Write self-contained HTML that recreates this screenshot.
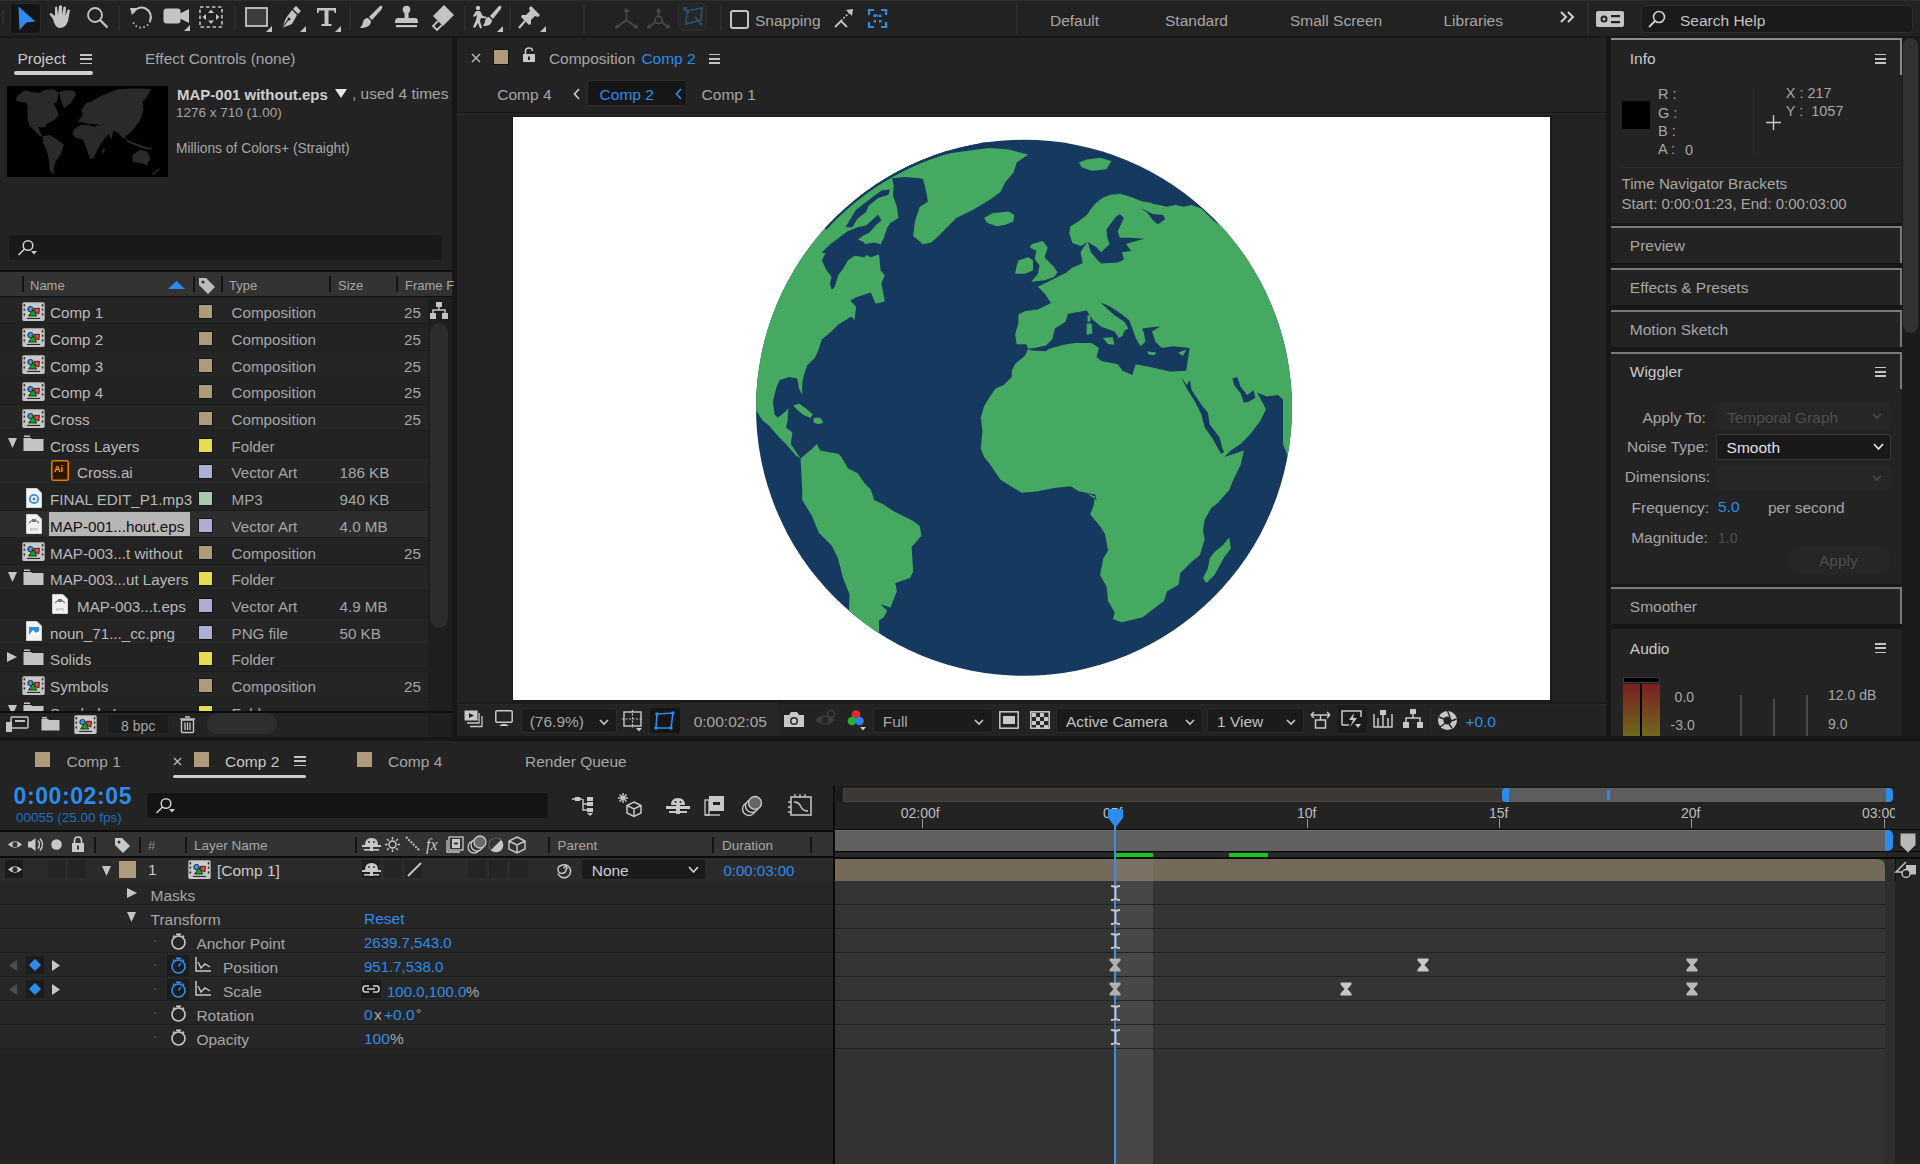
<!DOCTYPE html><html><head><meta charset="utf-8"><style>
html,body{margin:0;padding:0;width:1920px;height:1164px;overflow:hidden;background:#171717}
body>*{position:absolute}
.t{position:absolute;white-space:pre;line-height:normal;font-family:"Liberation Sans",sans-serif}
svg{position:absolute;overflow:visible}
div{position:absolute;box-sizing:border-box}
</style></head><body>
<div style="left:0px;top:0px;width:1920px;height:1164px;background:#171717;"></div>
<div style="left:0px;top:0px;width:1920px;height:36px;background:#222222;"></div>
<div style="left:0px;top:0px;width:1920px;height:1px;background:#2c2c2c;"></div>
<div style="left:0px;top:38px;width:452px;height:698px;background:#232323;"></div>
<div style="left:457px;top:38px;width:1149px;height:698px;background:#232323;"></div>
<div style="left:1611px;top:38px;width:309px;height:698px;background:#232323;"></div>
<div style="left:0px;top:741px;width:1920px;height:423px;background:#232323;"></div>
<div style="left:2px;top:10px;width:2px;height:14px;background:#2e2e2e;"></div>
<div style="left:10px;top:2.5px;width:31px;height:31px;background:#141414;border-radius:4px;border:1px solid #2a2a2a"></div>
<svg style="left:17px;top:5px;" width="20" height="26" viewBox="0 0 20 26"><path d="M1.5,1.5 L18.5,16.5 L9.5,17.5 L2.5,25 Z" fill="#2d8ceb"/></svg>
<svg style="left:48px;top:5px;" width="25" height="24" viewBox="0 0 25 24"><path d="M5,14 L2,10 Q1,8 3,8 L7,11 L7,3 Q7,1 9,1.5 L10,10 L11,1 Q12,-0.5 14,1 L14,10 L15.5,2 Q17,1 18,2.5 L17.5,11 L19.5,5 Q21,4 22,5.5 L20,16 Q18,23 12,23 Q7,23 5,14Z" fill="#c4c4c4"/></svg>
<svg style="left:86px;top:6px;" width="23" height="23" viewBox="0 0 23 23"><circle cx="9" cy="9" r="7" fill="none" stroke="#c4c4c4" stroke-width="1.8"/><path d="M14,14 L21.5,21.5" stroke="#c4c4c4" stroke-width="2.4"/></svg>
<div style="left:118px;top:6px;width:1.5px;height:25px;background:#2c2c2c;"></div>
<svg style="left:129px;top:5px;" width="24" height="24" viewBox="0 0 24 24"><path d="M4,8 A9,9 0 1 1 21,16" fill="none" stroke="#c4c4c4" stroke-width="2"/><path d="M1,3 L8,3 L3,10Z" fill="#c4c4c4"/><path d="M21,16 A9,9 0 0 1 4,17" fill="none" stroke="#c4c4c4" stroke-width="1.8" stroke-dasharray="1.5,2.5"/></svg>
<svg style="left:163px;top:7px;" width="27" height="24" viewBox="0 0 27 24"><rect x="0.5" y="1.5" width="17" height="15" rx="3" fill="#c4c4c4"/><path d="M16,7 L26,2 L26,16 L16,11Z" fill="#c4c4c4"/></svg>
<svg style="left:184px;top:25px;" width="6" height="6" viewBox="0 0 6 6"><path d="M6,0 L6,6 L0,6Z" fill="#c4c4c4"/></svg>
<svg style="left:199px;top:6px;" width="24" height="22" viewBox="0 0 24 22"><rect x="1" y="1" width="22" height="20" fill="none" stroke="#c4c4c4" stroke-width="1.6" stroke-dasharray="3.5,2.5"/><path d="M12,3.5 L15,7 L9,7Z M12,18 L15,14.5 L9,14.5Z M3.5,11 L7,8 L7,14Z M20.5,11 L17,8 L17,14Z" fill="#c4c4c4"/></svg>
<div style="left:234px;top:6px;width:1.5px;height:25px;background:#2c2c2c;"></div>
<svg style="left:245px;top:7px;" width="23" height="20" viewBox="0 0 23 20"><rect x="1" y="1" width="21" height="18" fill="#3c3c3c" stroke="#c4c4c4" stroke-width="1.8"/></svg>
<svg style="left:266px;top:26px;" width="6" height="6" viewBox="0 0 6 6"><path d="M6,0 L6,6 L0,6Z" fill="#c4c4c4"/></svg>
<svg style="left:279px;top:5px;" width="23" height="24" viewBox="0 0 23 24"><path d="M17,1 L22,6 L19,9 L14,4Z" fill="#c4c4c4"/><path d="M13,5 L18,10 L13,19 L3,23 L7,13Z" fill="#c4c4c4"/><path d="M3,23 L9,15" stroke="#222" stroke-width="1.2"/><circle cx="10" cy="14" r="1.5" fill="#222"/></svg>
<svg style="left:300px;top:26px;" width="6" height="6" viewBox="0 0 6 6"><path d="M6,0 L6,6 L0,6Z" fill="#c4c4c4"/></svg>
<svg style="left:316px;top:7px;" width="21" height="20" viewBox="0 0 21 20"><path d="M1,1 L20,1 L20,6 L18.5,6 L18,3.5 L12.5,3.5 L12.5,17 L15.5,17 L15.5,19 L5.5,19 L5.5,17 L8.5,17 L8.5,3.5 L3,3.5 L2.5,6 L1,6Z" fill="#c4c4c4"/></svg>
<svg style="left:335px;top:26px;" width="6" height="6" viewBox="0 0 6 6"><path d="M6,0 L6,6 L0,6Z" fill="#c4c4c4"/></svg>
<div style="left:349px;top:6px;width:1.5px;height:25px;background:#2c2c2c;"></div>
<svg style="left:359px;top:5px;" width="25" height="24" viewBox="0 0 25 24"><path d="M23,1 Q24,2 22,5 L13,15 L10,12 L20,2 Q22,0 23,1Z" fill="#c4c4c4"/><path d="M9,13 L12,16 Q12,21 6,22.5 Q3,23 1,23 Q4,20 4,17 Q5,13 9,13Z" fill="#c4c4c4"/></svg>
<svg style="left:394px;top:5px;" width="25" height="24" viewBox="0 0 25 24"><circle cx="12.5" cy="4.5" r="3.8" fill="#c4c4c4"/><rect x="10.5" y="7" width="4" height="6" fill="#c4c4c4"/><path d="M4,13 L21,13 Q24,13 24,17 L24,18 L1,18 L1,17 Q1,13 4,13Z" fill="#c4c4c4"/><rect x="2" y="20" width="21" height="2.2" fill="#c4c4c4"/></svg>
<svg style="left:430px;top:4px;" width="25" height="26" viewBox="0 0 25 26"><path d="M14,1 L24,11 L13,22 L3,12Z" fill="#c4c4c4"/><path d="M8,17 L3,22 L7,26 L12,21" fill="none" stroke="#c4c4c4" stroke-width="1.8"/></svg>
<div style="left:464px;top:6px;width:1.5px;height:25px;background:#2c2c2c;"></div>
<svg style="left:472px;top:5px;" width="31" height="24" viewBox="0 0 31 24"><circle cx="6" cy="3" r="2.2" fill="#c4c4c4"/><path d="M4,6 L8,6 L11,11 L15,12 L14,13.5 L9,13 L8,16 L10,23 L8,23.5 L6,18 L3,23 L1,22 L4,15 L5,10 L2,12 L1,11Z" fill="#c4c4c4"/><path d="M29,1 Q30,2 28,5 L21,14 L18,11 L26,2 Q28,0 29,1Z" fill="#c4c4c4"/><path d="M17,12 L20,15 Q20,20 14,21 Q12,21 11,21 Q13,18 13,16 Q14,12 17,12Z" fill="#c4c4c4"/></svg>
<svg style="left:497px;top:26px;" width="6" height="6" viewBox="0 0 6 6"><path d="M6,0 L6,6 L0,6Z" fill="#c4c4c4"/></svg>
<div style="left:509px;top:6px;width:1.5px;height:25px;background:#2c2c2c;"></div>
<svg style="left:518px;top:5px;" width="23" height="24" viewBox="0 0 23 24"><path d="M13,1 L22,10 L20,12 L17,11 L13,15 L13,19 L11,20 L3,12 L4,10 L8,10 L12,6 L11,3Z" fill="#c4c4c4"/><path d="M7,16 L1,23" stroke="#c4c4c4" stroke-width="2.2"/></svg>
<svg style="left:540px;top:26px;" width="6" height="6" viewBox="0 0 6 6"><path d="M6,0 L6,6 L0,6Z" fill="#c4c4c4"/></svg>
<div style="left:583px;top:2px;width:1.5px;height:32px;background:#2c2c2c;"></div>
<svg style="left:615px;top:8px;" width="23" height="21" viewBox="0 0 23 21"><path d="M11.5,1 L11.5,12 L2,19 M11.5,12 L21,19" fill="none" stroke="#4a4a4a" stroke-width="1.6"/><path d="M8.5,4 L11.5,0 L14.5,4Z M1,16 L0,20.5 L4.5,20Z M22,16 L23,20.5 L18.5,20Z" fill="#4a4a4a"/></svg>
<svg style="left:647px;top:8px;" width="23" height="21" viewBox="0 0 23 21"><path d="M11.5,1 L11.5,8 M8.5,14 L2,19 M14.5,14 L21,19" fill="none" stroke="#4a4a4a" stroke-width="1.6"/><circle cx="11.5" cy="12" r="3.5" fill="none" stroke="#4a4a4a" stroke-width="1.6"/><path d="M8.5,4 L11.5,0 L14.5,4Z M1,16 L0,20.5 L4.5,20Z M22,16 L23,20.5 L18.5,20Z" fill="#4a4a4a"/></svg>
<div style="left:678px;top:3px;width:29px;height:28px;background:#262626;border-radius:4px;border:1px solid #2e2e2e"></div>
<svg style="left:682px;top:6px;" width="22" height="21" viewBox="0 0 22 21"><path d="M5,5 L20,2 L19,14 L4,18Z" fill="none" stroke="#2a5277" stroke-width="1.6"/><path d="M2,2 L7,7 M13,11 L20,19" stroke="#2a5277" stroke-width="1.6"/><path d="M1,1 L6,1.5 L1.5,6Z" fill="#2a5277"/></svg>
<div style="left:720px;top:5px;width:1.5px;height:26px;background:#2c2c2c;"></div>
<div style="left:730px;top:10px;width:19px;height:19px;background:none;border:2.2px solid #c4c4c4;border-radius:3px"></div>
<span class="t" style="left:755px;top:12.47px;font-size:15.5px;color:#a6a6a6;">Snapping</span>
<svg style="left:834px;top:8px;" width="20" height="21" viewBox="0 0 20 21"><path d="M1,19 L7,13 L13,19" fill="none" stroke="#c4c4c4" stroke-width="1.8"/><path d="M7,13 L15,5" stroke="#c4c4c4" stroke-width="1.5" stroke-dasharray="2,1.5"/><path d="M12,2 L19,1 L18,8Z" fill="#c4c4c4"/></svg>
<svg style="left:868px;top:9px;" width="19" height="19" viewBox="0 0 19 19"><path d="M1,6 L1,1 L6,1 M13,1 L18,1 L18,6 M18,13 L18,18 L13,18 M6,18 L1,18 L1,13" fill="none" stroke="#2d8ceb" stroke-width="2.2"/><path d="M7,6 L9.5,6 M9.5,6 L9.5,8 M12,6 L12,8" stroke="#2d8ceb" stroke-width="1.6"/><rect x="5.5" y="5.5" width="2.5" height="2.5" fill="#2d8ceb"/><rect x="11" y="5.5" width="2.5" height="2.5" fill="#2d8ceb"/><rect x="5.5" y="11" width="2.5" height="2.5" fill="#2d8ceb"/><rect x="11" y="11" width="2.5" height="2.5" fill="#2d8ceb"/></svg>
<div style="left:1016px;top:2px;width:1.5px;height:32px;background:#2c2c2c;"></div>
<span class="t" style="left:1050px;top:12.47px;font-size:15.5px;color:#a6a6a6;">Default</span>
<span class="t" style="left:1165px;top:12.47px;font-size:15.5px;color:#a6a6a6;">Standard</span>
<span class="t" style="left:1290px;top:12.47px;font-size:15.5px;color:#a6a6a6;">Small Screen</span>
<span class="t" style="left:1443.5px;top:12.47px;font-size:15.5px;color:#a6a6a6;">Libraries</span>
<svg style="left:1560px;top:11px;" width="15" height="12" viewBox="0 0 15 12"><path d="M1,1 L6,6 L1,11 M8,1 L13,6 L8,11" fill="none" stroke="#d0d0d0" stroke-width="2"/></svg>
<div style="left:1587px;top:2px;width:1.5px;height:32px;background:#2c2c2c;"></div>
<svg style="left:1596px;top:11px;" width="28" height="16" viewBox="0 0 28 16"><rect x="0" y="0" width="28" height="16" rx="2" fill="#c4c4c4"/><circle cx="8" cy="8" r="3.5" fill="#222"/><circle cx="8" cy="8" r="1.5" fill="#c4c4c4"/><rect x="15" y="4" width="9" height="2.2" fill="#222"/><rect x="15" y="10" width="9" height="2.2" fill="#222"/></svg>
<div style="left:1641px;top:5px;width:272px;height:28px;background:#1a1a1a;border-radius:4px;border:1px solid #2e2e2e"></div>
<svg style="left:1648px;top:10px;" width="18" height="18" viewBox="0 0 18 18"><circle cx="11" cy="7" r="5.5" fill="none" stroke="#cfcfcf" stroke-width="1.6"/><path d="M7,11 L1,17" stroke="#cfcfcf" stroke-width="1.8"/></svg>
<span class="t" style="left:1680px;top:11.97px;font-size:15.5px;color:#c4c4c4;">Search Help</span>
<span class="t" style="left:17.5px;top:49.67px;font-size:15.5px;color:#c9c9c9;">Project</span>
<div style="left:80px;top:54.0px;width:12px;height:1.6px;background:#c4c4c4;"></div>
<div style="left:80px;top:58.3px;width:12px;height:1.6px;background:#c4c4c4;"></div>
<div style="left:80px;top:62.6px;width:12px;height:1.6px;background:#c4c4c4;"></div>
<div style="left:14px;top:71px;width:79px;height:3.5px;background:#cfcfcf;border-radius:2px"></div>
<span class="t" style="left:145px;top:49.67px;font-size:15.5px;color:#a6a6a6;">Effect Controls (none)</span>
<div style="left:7px;top:86px;width:161px;height:91px;background:#000;"></div>
<svg style="left:7px;top:86px;" width="161" height="91" viewBox="0 0 161 91"><path d="M11.1,9.3 L18.0,4.2 L24.0,5.9 L32.7,6.7 L37.0,4.2 L46.5,3.3 L51.7,6.7 L50.0,15.4 L46.5,18.0 L50.0,24.0 L51.7,29.2 L46.5,34.4 L39.6,37.9 L37.9,41.3 L31.0,41.3 L34.4,48.2 L36.1,50.8 L32.7,50.0 L25.8,43.1 L22.3,39.6 L20.6,32.7 L20.6,19.7 L18.8,16.3 L11.1,15.4 L8.5,13.7Z" fill="#2a2a2a"/><path d="M51.7,5.9 L58.6,4.2 L67.3,5.0 L69.0,8.5 L63.8,17.1 L56.9,22.3 L54.3,15.4Z" fill="#2a2a2a"/><path d="M36.1,50.0 L43.1,49.1 L50.0,53.4 L56.9,58.6 L53.4,69.0 L48.2,75.9 L46.5,84.6 L47.4,88.0 L43.1,85.4 L42.2,75.9 L39.6,63.8 L36.1,56.9Z" fill="#2a2a2a"/><path d="M70.7,36.1 L75.9,28.4 L74.2,24.0 L79.4,17.1 L84.6,15.4 L93.2,10.2 L101.9,6.7 L110.5,3.3 L123.5,2.4 L136.4,2.4 L144.2,3.3 L139.9,11.1 L135.6,15.4 L136.4,24.0 L133.0,34.4 L127.8,41.3 L123.5,46.5 L119.1,50.0 L115.7,46.5 L110.5,46.5 L106.2,44.8 L104.4,53.4 L100.1,44.8 L97.5,41.3 L89.7,37.9 L81.1,37.9 L74.2,36.1Z" fill="#2a2a2a"/><path d="M67.3,43.1 L74.2,38.7 L82.8,39.6 L89.7,41.3 L93.2,46.5 L98.4,51.7 L93.2,58.6 L89.7,65.5 L86.3,72.5 L82.8,72.5 L79.4,62.1 L75.9,53.4 L69.0,51.7 L65.5,48.2Z" fill="#2a2a2a"/><path d="M110.5,46.5 L117.4,46.5 L119.1,53.4 L114.0,50.0Z" fill="#2a2a2a"/><path d="M119.1,53.4 L127.8,56.9 L136.4,60.3 L145.1,62.1 L144.2,63.8 L134.7,62.1 L126.1,58.6 L119.1,55.2Z" fill="#2a2a2a"/><path d="M125.2,69.0 L133.0,63.8 L139.9,65.5 L143.4,72.5 L139.9,79.4 L135.6,77.6 L126.1,75.9Z" fill="#2a2a2a"/><path d="M94.9,63.8 L98.4,62.1 L95.8,69.0Z" fill="#2a2a2a"/><path d="M88.0,38.7 L97.5,40.5 L102.7,46.5 L99.3,51.7 L93.2,48.2 L89.7,42.2Z" fill="#2a2a2a"/><path d="M145.1,88.0 L152.0,82.0 L152.9,83.3 L145.9,88.9Z" fill="#2a2a2a"/></svg>
<span class="t" style="left:177px;top:85.62px;font-size:15px;color:#cfcfcf;font-weight:700;">MAP-001 without.eps</span>
<svg style="left:335px;top:89px;" width="12" height="9" viewBox="0 0 12 9"><path d="M0,0 L12,0 L6,9 Z" fill="#e6e6e6"/></svg>
<span class="t" style="left:352px;top:85.17px;font-size:15.5px;color:#a6a6a6;">, used 4 times</span>
<span class="t" style="left:176px;top:105.08px;font-size:13.5px;color:#a6a6a6;">1276 x 710 (1.00)</span>
<span class="t" style="left:176px;top:140.81px;font-size:13.8px;color:#a6a6a6;">Millions of Colors+ (Straight)</span>
<div style="left:8px;top:234px;width:435px;height:27px;background:#191919;border-radius:4px;border:1px solid #262626"></div>
<svg style="left:17px;top:239px;" width="20" height="17" viewBox="0 0 20 17"><circle cx="11" cy="6.5" r="4.8" fill="none" stroke="#cfcfcf" stroke-width="1.5"/><path d="M7.5,10 L1.5,16" stroke="#cfcfcf" stroke-width="1.6"/><path d="M14,12 L20,12 L17,15.5Z" fill="#cfcfcf"/></svg>
<div style="left:0px;top:270px;width:452px;height:2px;background:#111;"></div>
<div style="left:0px;top:272px;width:452px;height:25px;background:#333333;"></div>
<div style="left:0px;top:296px;width:452px;height:1.5px;background:#111;"></div>
<div style="left:22px;top:276px;width:1.6px;height:16px;background:#141414;"></div>
<div style="left:193px;top:276px;width:1.6px;height:16px;background:#141414;"></div>
<div style="left:221px;top:276px;width:1.6px;height:16px;background:#141414;"></div>
<div style="left:329px;top:276px;width:1.6px;height:16px;background:#141414;"></div>
<div style="left:396px;top:276px;width:1.6px;height:16px;background:#141414;"></div>
<span class="t" style="left:30px;top:278.24px;font-size:13px;color:#a6a6a6;">Name</span>
<svg style="left:168px;top:281px;" width="17" height="8" viewBox="0 0 17 8"><path d="M0,8 L8.5,0 L17,8 Z" fill="#2d8ceb"/></svg>
<svg style="left:198px;top:277px;" width="18" height="17" viewBox="0 0 18 17"><path d="M1,1 L8,1 L17,10 L10,17 L1,8 Z" fill="#bdbdbd"/><circle cx="5" cy="5" r="1.6" fill="#333"/></svg>
<span class="t" style="left:229px;top:278.24px;font-size:13px;color:#a6a6a6;">Type</span>
<span class="t" style="left:338px;top:278.24px;font-size:13px;color:#a6a6a6;">Size</span>
<span class="t" style="left:405px;top:278.24px;font-size:13px;color:#a6a6a6;">Frame F</span>
<div style="left:0;top:297px;width:428px;height:414px;overflow:hidden">
<div style="left:0px;top:-0.30000000000001137px;width:428px;height:26.7px;background:#252525;"></div>
<div style="left:0px;top:-0.30000000000001137px;width:428px;height:1px;background:#1d1d1d;"></div>
<svg style="left:22px;top:4.699999999999989px;" width="23" height="19" viewBox="0 0 23 19"><rect x="0.3" y="0.3" width="22.4" height="18.6" rx="1.6" fill="#c2c2c2"/><ellipse cx="2.3" cy="3.2" rx="0.8" ry="1.2" fill="#2e2e2e"/><ellipse cx="2.3" cy="7.6" rx="0.8" ry="1.2" fill="#2e2e2e"/><ellipse cx="2.3" cy="12.4" rx="0.8" ry="1.2" fill="#2e2e2e"/><ellipse cx="20.6" cy="3.2" rx="0.8" ry="1.2" fill="#2e2e2e"/><ellipse cx="20.6" cy="7.6" rx="0.8" ry="1.2" fill="#2e2e2e"/><ellipse cx="20.6" cy="12.4" rx="0.8" ry="1.2" fill="#2e2e2e"/><rect x="4.2" y="1.5" width="14.6" height="13" fill="#cbcbcb"/><path d="M12.2,6.4 L17.4,6.3 L16.9,12 L13.5,10.6Z" fill="#ff3b3b" stroke="#1d1d1d" stroke-width="0.9"/><circle cx="8.5" cy="7.1" r="2.7" fill="#2f93f2" stroke="#1d1d1d" stroke-width="0.9"/><path d="M6.6,14 L11,7.6 L14.8,14Z" fill="#14a814" stroke="#1d1d1d" stroke-width="0.9"/><rect x="5" y="15.9" width="13" height="1.1" fill="#2a2a2a"/></svg>
<span class="t" style="left:50px;top:7.24px;font-size:15.2px;color:#b9b9b9;">Comp 1</span>
<div style="left:198px;top:7.199999999999989px;width:15px;height:15px;background:#151515;"></div>
<div style="left:199px;top:8.199999999999989px;width:13px;height:13px;background:#ae9b79;"></div>
<span class="t" style="left:231.5px;top:7.24px;font-size:15.2px;color:#a6a6a6;">Composition</span>
<span class="t" style="left:380px;top:7.24px;width:41px;text-align:right;font-size:15.2px;color:#a6a6a6">25</span>
<div style="left:0px;top:26.399999999999977px;width:428px;height:26.7px;background:#232323;"></div>
<div style="left:0px;top:26.399999999999977px;width:428px;height:1px;background:#1d1d1d;"></div>
<svg style="left:22px;top:31.399999999999977px;" width="23" height="19" viewBox="0 0 23 19"><rect x="0.3" y="0.3" width="22.4" height="18.6" rx="1.6" fill="#c2c2c2"/><ellipse cx="2.3" cy="3.2" rx="0.8" ry="1.2" fill="#2e2e2e"/><ellipse cx="2.3" cy="7.6" rx="0.8" ry="1.2" fill="#2e2e2e"/><ellipse cx="2.3" cy="12.4" rx="0.8" ry="1.2" fill="#2e2e2e"/><ellipse cx="20.6" cy="3.2" rx="0.8" ry="1.2" fill="#2e2e2e"/><ellipse cx="20.6" cy="7.6" rx="0.8" ry="1.2" fill="#2e2e2e"/><ellipse cx="20.6" cy="12.4" rx="0.8" ry="1.2" fill="#2e2e2e"/><rect x="4.2" y="1.5" width="14.6" height="13" fill="#cbcbcb"/><path d="M12.2,6.4 L17.4,6.3 L16.9,12 L13.5,10.6Z" fill="#ff3b3b" stroke="#1d1d1d" stroke-width="0.9"/><circle cx="8.5" cy="7.1" r="2.7" fill="#2f93f2" stroke="#1d1d1d" stroke-width="0.9"/><path d="M6.6,14 L11,7.6 L14.8,14Z" fill="#14a814" stroke="#1d1d1d" stroke-width="0.9"/><rect x="5" y="15.9" width="13" height="1.1" fill="#2a2a2a"/></svg>
<span class="t" style="left:50px;top:33.94px;font-size:15.2px;color:#b9b9b9;">Comp 2</span>
<div style="left:198px;top:33.89999999999998px;width:15px;height:15px;background:#151515;"></div>
<div style="left:199px;top:34.89999999999998px;width:13px;height:13px;background:#ae9b79;"></div>
<span class="t" style="left:231.5px;top:33.94px;font-size:15.2px;color:#a6a6a6;">Composition</span>
<span class="t" style="left:380px;top:33.94px;width:41px;text-align:right;font-size:15.2px;color:#a6a6a6">25</span>
<div style="left:0px;top:53.099999999999966px;width:428px;height:26.7px;background:#252525;"></div>
<div style="left:0px;top:53.099999999999966px;width:428px;height:1px;background:#1d1d1d;"></div>
<svg style="left:22px;top:58.099999999999966px;" width="23" height="19" viewBox="0 0 23 19"><rect x="0.3" y="0.3" width="22.4" height="18.6" rx="1.6" fill="#c2c2c2"/><ellipse cx="2.3" cy="3.2" rx="0.8" ry="1.2" fill="#2e2e2e"/><ellipse cx="2.3" cy="7.6" rx="0.8" ry="1.2" fill="#2e2e2e"/><ellipse cx="2.3" cy="12.4" rx="0.8" ry="1.2" fill="#2e2e2e"/><ellipse cx="20.6" cy="3.2" rx="0.8" ry="1.2" fill="#2e2e2e"/><ellipse cx="20.6" cy="7.6" rx="0.8" ry="1.2" fill="#2e2e2e"/><ellipse cx="20.6" cy="12.4" rx="0.8" ry="1.2" fill="#2e2e2e"/><rect x="4.2" y="1.5" width="14.6" height="13" fill="#cbcbcb"/><path d="M12.2,6.4 L17.4,6.3 L16.9,12 L13.5,10.6Z" fill="#ff3b3b" stroke="#1d1d1d" stroke-width="0.9"/><circle cx="8.5" cy="7.1" r="2.7" fill="#2f93f2" stroke="#1d1d1d" stroke-width="0.9"/><path d="M6.6,14 L11,7.6 L14.8,14Z" fill="#14a814" stroke="#1d1d1d" stroke-width="0.9"/><rect x="5" y="15.9" width="13" height="1.1" fill="#2a2a2a"/></svg>
<span class="t" style="left:50px;top:60.64px;font-size:15.2px;color:#b9b9b9;">Comp 3</span>
<div style="left:198px;top:60.599999999999966px;width:15px;height:15px;background:#151515;"></div>
<div style="left:199px;top:61.599999999999966px;width:13px;height:13px;background:#ae9b79;"></div>
<span class="t" style="left:231.5px;top:60.64px;font-size:15.2px;color:#a6a6a6;">Composition</span>
<span class="t" style="left:380px;top:60.64px;width:41px;text-align:right;font-size:15.2px;color:#a6a6a6">25</span>
<div style="left:0px;top:79.79999999999995px;width:428px;height:26.7px;background:#232323;"></div>
<div style="left:0px;top:79.79999999999995px;width:428px;height:1px;background:#1d1d1d;"></div>
<svg style="left:22px;top:84.79999999999995px;" width="23" height="19" viewBox="0 0 23 19"><rect x="0.3" y="0.3" width="22.4" height="18.6" rx="1.6" fill="#c2c2c2"/><ellipse cx="2.3" cy="3.2" rx="0.8" ry="1.2" fill="#2e2e2e"/><ellipse cx="2.3" cy="7.6" rx="0.8" ry="1.2" fill="#2e2e2e"/><ellipse cx="2.3" cy="12.4" rx="0.8" ry="1.2" fill="#2e2e2e"/><ellipse cx="20.6" cy="3.2" rx="0.8" ry="1.2" fill="#2e2e2e"/><ellipse cx="20.6" cy="7.6" rx="0.8" ry="1.2" fill="#2e2e2e"/><ellipse cx="20.6" cy="12.4" rx="0.8" ry="1.2" fill="#2e2e2e"/><rect x="4.2" y="1.5" width="14.6" height="13" fill="#cbcbcb"/><path d="M12.2,6.4 L17.4,6.3 L16.9,12 L13.5,10.6Z" fill="#ff3b3b" stroke="#1d1d1d" stroke-width="0.9"/><circle cx="8.5" cy="7.1" r="2.7" fill="#2f93f2" stroke="#1d1d1d" stroke-width="0.9"/><path d="M6.6,14 L11,7.6 L14.8,14Z" fill="#14a814" stroke="#1d1d1d" stroke-width="0.9"/><rect x="5" y="15.9" width="13" height="1.1" fill="#2a2a2a"/></svg>
<span class="t" style="left:50px;top:87.34px;font-size:15.2px;color:#b9b9b9;">Comp 4</span>
<div style="left:198px;top:87.29999999999995px;width:15px;height:15px;background:#151515;"></div>
<div style="left:199px;top:88.29999999999995px;width:13px;height:13px;background:#ae9b79;"></div>
<span class="t" style="left:231.5px;top:87.34px;font-size:15.2px;color:#a6a6a6;">Composition</span>
<span class="t" style="left:380px;top:87.34px;width:41px;text-align:right;font-size:15.2px;color:#a6a6a6">25</span>
<div style="left:0px;top:106.5px;width:428px;height:26.7px;background:#252525;"></div>
<div style="left:0px;top:106.5px;width:428px;height:1px;background:#1d1d1d;"></div>
<svg style="left:22px;top:111.5px;" width="23" height="19" viewBox="0 0 23 19"><rect x="0.3" y="0.3" width="22.4" height="18.6" rx="1.6" fill="#c2c2c2"/><ellipse cx="2.3" cy="3.2" rx="0.8" ry="1.2" fill="#2e2e2e"/><ellipse cx="2.3" cy="7.6" rx="0.8" ry="1.2" fill="#2e2e2e"/><ellipse cx="2.3" cy="12.4" rx="0.8" ry="1.2" fill="#2e2e2e"/><ellipse cx="20.6" cy="3.2" rx="0.8" ry="1.2" fill="#2e2e2e"/><ellipse cx="20.6" cy="7.6" rx="0.8" ry="1.2" fill="#2e2e2e"/><ellipse cx="20.6" cy="12.4" rx="0.8" ry="1.2" fill="#2e2e2e"/><rect x="4.2" y="1.5" width="14.6" height="13" fill="#cbcbcb"/><path d="M12.2,6.4 L17.4,6.3 L16.9,12 L13.5,10.6Z" fill="#ff3b3b" stroke="#1d1d1d" stroke-width="0.9"/><circle cx="8.5" cy="7.1" r="2.7" fill="#2f93f2" stroke="#1d1d1d" stroke-width="0.9"/><path d="M6.6,14 L11,7.6 L14.8,14Z" fill="#14a814" stroke="#1d1d1d" stroke-width="0.9"/><rect x="5" y="15.9" width="13" height="1.1" fill="#2a2a2a"/></svg>
<span class="t" style="left:50px;top:114.04px;font-size:15.2px;color:#b9b9b9;">Cross</span>
<div style="left:198px;top:114.0px;width:15px;height:15px;background:#151515;"></div>
<div style="left:199px;top:115.0px;width:13px;height:13px;background:#ae9b79;"></div>
<span class="t" style="left:231.5px;top:114.04px;font-size:15.2px;color:#a6a6a6;">Composition</span>
<span class="t" style="left:380px;top:114.04px;width:41px;text-align:right;font-size:15.2px;color:#a6a6a6">25</span>
<div style="left:0px;top:133.2px;width:428px;height:26.7px;background:#232323;"></div>
<div style="left:0px;top:133.2px;width:428px;height:1px;background:#1d1d1d;"></div>
<svg style="left:23px;top:138.2px;" width="21" height="17" viewBox="0 0 21 17"><path d="M0.5,3 L0.5,16 L20.5,16 L20.5,4 L9,4 L8,3 Z" fill="#c4c4c4"/><rect x="1" y="0.5" width="6" height="1.5" fill="#c4c4c4"/></svg>
<svg style="left:8px;top:141.2px;" width="9" height="10" viewBox="0 0 9 10"><path d="M0,0 L9,0 L4.5,10 Z" fill="#c4c4c4"/></svg>
<span class="t" style="left:50px;top:140.74px;font-size:15.2px;color:#b9b9b9;">Cross Layers</span>
<div style="left:198px;top:140.7px;width:15px;height:15px;background:#151515;"></div>
<div style="left:199px;top:141.7px;width:13px;height:13px;background:#e6dc52;"></div>
<span class="t" style="left:231.5px;top:140.74px;font-size:15.2px;color:#a6a6a6;">Folder</span>
<div style="left:0px;top:159.89999999999998px;width:428px;height:26.7px;background:#252525;"></div>
<div style="left:0px;top:159.89999999999998px;width:428px;height:1px;background:#1d1d1d;"></div>
<svg style="left:51px;top:162.89999999999998px;" width="18" height="21" viewBox="0 0 18 21"><rect x="0.8" y="0.8" width="16.4" height="19.4" rx="1.5" fill="#2b1600" stroke="#e07b00" stroke-width="1.6"/><text x="3" y="12" font-family="Liberation Sans" font-weight="700" font-size="9" fill="#f5a623">Ai</text></svg>
<span class="t" style="left:77px;top:167.44px;font-size:15.2px;color:#b9b9b9;">Cross.ai</span>
<div style="left:198px;top:167.39999999999998px;width:15px;height:15px;background:#151515;"></div>
<div style="left:199px;top:168.39999999999998px;width:13px;height:13px;background:#aeaed2;"></div>
<span class="t" style="left:231.5px;top:167.44px;font-size:15.2px;color:#a6a6a6;">Vector Art</span>
<span class="t" style="left:339.5px;top:167.44px;font-size:15.2px;color:#a6a6a6;">186 KB</span>
<div style="left:0px;top:186.60000000000002px;width:428px;height:26.7px;background:#232323;"></div>
<div style="left:0px;top:186.60000000000002px;width:428px;height:1px;background:#1d1d1d;"></div>
<svg style="left:26px;top:190.60000000000002px;" width="16" height="20" viewBox="0 0 16 20"><path d="M0.5,0.5 L11,0.5 L15.5,5 L15.5,19.5 L0.5,19.5 Z" fill="#f2f2f2" stroke="#cfcfcf" stroke-width="1"/><circle cx="8" cy="11" r="4.2" fill="none" stroke="#2d8ceb" stroke-width="1.8"/><circle cx="8" cy="11" r="1.5" fill="#2d8ceb"/></svg>
<span class="t" style="left:50px;top:194.14px;font-size:15.2px;color:#b9b9b9;">FINAL EDIT_P1.mp3</span>
<div style="left:198px;top:194.10000000000002px;width:15px;height:15px;background:#151515;"></div>
<div style="left:199px;top:195.10000000000002px;width:13px;height:13px;background:#a9c8ae;"></div>
<span class="t" style="left:231.5px;top:194.14px;font-size:15.2px;color:#a6a6a6;">MP3</span>
<span class="t" style="left:339.5px;top:194.14px;font-size:15.2px;color:#a6a6a6;">940 KB</span>
<div style="left:0px;top:213.29999999999995px;width:428px;height:26.7px;background:#2d2d2d;"></div>
<div style="left:0px;top:213.29999999999995px;width:428px;height:1px;background:#1d1d1d;"></div>
<div style="left:49px;top:215.29999999999995px;width:141px;height:23.7px;background:#b6b6b6;"></div>
<svg style="left:26px;top:217.29999999999995px;" width="16" height="20" viewBox="0 0 16 20"><path d="M0.5,0.5 L11,0.5 L15.5,5 L15.5,19.5 L0.5,19.5 Z" fill="#f2f2f2" stroke="#cfcfcf" stroke-width="1"/><path d="M3,9 Q8,3 13,9" fill="none" stroke="#777" stroke-width="1.2"/><rect x="6" y="5" width="4" height="3" fill="#777"/><text x="4" y="17" font-size="4" fill="#999" font-family="Liberation Sans">EPS</text></svg>
<span class="t" style="left:50px;top:220.84px;font-size:15.2px;color:#101010;">MAP-001...hout.eps</span>
<div style="left:198px;top:220.79999999999995px;width:15px;height:15px;background:#151515;"></div>
<div style="left:199px;top:221.79999999999995px;width:13px;height:13px;background:#aeaed2;"></div>
<span class="t" style="left:231.5px;top:220.84px;font-size:15.2px;color:#a6a6a6;">Vector Art</span>
<span class="t" style="left:339.5px;top:220.84px;font-size:15.2px;color:#a6a6a6;">4.0 MB</span>
<div style="left:0px;top:240.0px;width:428px;height:26.7px;background:#232323;"></div>
<div style="left:0px;top:240.0px;width:428px;height:1px;background:#1d1d1d;"></div>
<svg style="left:22px;top:245.0px;" width="23" height="19" viewBox="0 0 23 19"><rect x="0.3" y="0.3" width="22.4" height="18.6" rx="1.6" fill="#c2c2c2"/><ellipse cx="2.3" cy="3.2" rx="0.8" ry="1.2" fill="#2e2e2e"/><ellipse cx="2.3" cy="7.6" rx="0.8" ry="1.2" fill="#2e2e2e"/><ellipse cx="2.3" cy="12.4" rx="0.8" ry="1.2" fill="#2e2e2e"/><ellipse cx="20.6" cy="3.2" rx="0.8" ry="1.2" fill="#2e2e2e"/><ellipse cx="20.6" cy="7.6" rx="0.8" ry="1.2" fill="#2e2e2e"/><ellipse cx="20.6" cy="12.4" rx="0.8" ry="1.2" fill="#2e2e2e"/><rect x="4.2" y="1.5" width="14.6" height="13" fill="#cbcbcb"/><path d="M12.2,6.4 L17.4,6.3 L16.9,12 L13.5,10.6Z" fill="#ff3b3b" stroke="#1d1d1d" stroke-width="0.9"/><circle cx="8.5" cy="7.1" r="2.7" fill="#2f93f2" stroke="#1d1d1d" stroke-width="0.9"/><path d="M6.6,14 L11,7.6 L14.8,14Z" fill="#14a814" stroke="#1d1d1d" stroke-width="0.9"/><rect x="5" y="15.9" width="13" height="1.1" fill="#2a2a2a"/></svg>
<span class="t" style="left:50px;top:247.54px;font-size:15.2px;color:#b9b9b9;">MAP-003...t without</span>
<div style="left:198px;top:247.5px;width:15px;height:15px;background:#151515;"></div>
<div style="left:199px;top:248.5px;width:13px;height:13px;background:#ae9b79;"></div>
<span class="t" style="left:231.5px;top:247.54px;font-size:15.2px;color:#a6a6a6;">Composition</span>
<span class="t" style="left:380px;top:247.54px;width:41px;text-align:right;font-size:15.2px;color:#a6a6a6">25</span>
<div style="left:0px;top:266.70000000000005px;width:428px;height:26.7px;background:#252525;"></div>
<div style="left:0px;top:266.70000000000005px;width:428px;height:1px;background:#1d1d1d;"></div>
<svg style="left:23px;top:271.70000000000005px;" width="21" height="17" viewBox="0 0 21 17"><path d="M0.5,3 L0.5,16 L20.5,16 L20.5,4 L9,4 L8,3 Z" fill="#c4c4c4"/><rect x="1" y="0.5" width="6" height="1.5" fill="#c4c4c4"/></svg>
<svg style="left:8px;top:274.70000000000005px;" width="9" height="10" viewBox="0 0 9 10"><path d="M0,0 L9,0 L4.5,10 Z" fill="#c4c4c4"/></svg>
<span class="t" style="left:50px;top:274.24px;font-size:15.2px;color:#b9b9b9;">MAP-003...ut Layers</span>
<div style="left:198px;top:274.20000000000005px;width:15px;height:15px;background:#151515;"></div>
<div style="left:199px;top:275.20000000000005px;width:13px;height:13px;background:#e6dc52;"></div>
<span class="t" style="left:231.5px;top:274.24px;font-size:15.2px;color:#a6a6a6;">Folder</span>
<div style="left:0px;top:293.4px;width:428px;height:26.7px;background:#232323;"></div>
<div style="left:0px;top:293.4px;width:428px;height:1px;background:#1d1d1d;"></div>
<svg style="left:52px;top:297.4px;" width="16" height="20" viewBox="0 0 16 20"><path d="M0.5,0.5 L11,0.5 L15.5,5 L15.5,19.5 L0.5,19.5 Z" fill="#f2f2f2" stroke="#cfcfcf" stroke-width="1"/><path d="M3,9 Q8,3 13,9" fill="none" stroke="#777" stroke-width="1.2"/><rect x="6" y="5" width="4" height="3" fill="#777"/><text x="4" y="17" font-size="4" fill="#999" font-family="Liberation Sans">EPS</text></svg>
<span class="t" style="left:77px;top:300.94px;font-size:15.2px;color:#b9b9b9;">MAP-003...t.eps</span>
<div style="left:198px;top:300.9px;width:15px;height:15px;background:#151515;"></div>
<div style="left:199px;top:301.9px;width:13px;height:13px;background:#aeaed2;"></div>
<span class="t" style="left:231.5px;top:300.94px;font-size:15.2px;color:#a6a6a6;">Vector Art</span>
<span class="t" style="left:339.5px;top:300.94px;font-size:15.2px;color:#a6a6a6;">4.9 MB</span>
<div style="left:0px;top:320.0999999999999px;width:428px;height:26.7px;background:#252525;"></div>
<div style="left:0px;top:320.0999999999999px;width:428px;height:1px;background:#1d1d1d;"></div>
<svg style="left:26px;top:324.0999999999999px;" width="16" height="20" viewBox="0 0 16 20"><path d="M0.5,0.5 L11,0.5 L15.5,5 L15.5,19.5 L0.5,19.5 Z" fill="#f2f2f2" stroke="#cfcfcf" stroke-width="1"/><rect x="3" y="6" width="10" height="8" fill="#2d8ceb"/><path d="M3,14 L7,9 L10,12 L13,10 L13,14Z" fill="#fff"/></svg>
<span class="t" style="left:50px;top:327.64px;font-size:15.2px;color:#b9b9b9;">noun_71..._cc.png</span>
<div style="left:198px;top:327.5999999999999px;width:15px;height:15px;background:#151515;"></div>
<div style="left:199px;top:328.5999999999999px;width:13px;height:13px;background:#aeaed2;"></div>
<span class="t" style="left:231.5px;top:327.64px;font-size:15.2px;color:#a6a6a6;">PNG file</span>
<span class="t" style="left:339.5px;top:327.64px;font-size:15.2px;color:#a6a6a6;">50 KB</span>
<div style="left:0px;top:346.79999999999995px;width:428px;height:26.7px;background:#232323;"></div>
<div style="left:0px;top:346.79999999999995px;width:428px;height:1px;background:#1d1d1d;"></div>
<svg style="left:23px;top:351.79999999999995px;" width="21" height="17" viewBox="0 0 21 17"><path d="M0.5,3 L0.5,16 L20.5,16 L20.5,4 L9,4 L8,3 Z" fill="#c4c4c4"/><rect x="1" y="0.5" width="6" height="1.5" fill="#c4c4c4"/></svg>
<svg style="left:7px;top:354.79999999999995px;" width="10" height="10" viewBox="0 0 10 10"><path d="M0,0 L10,5.0 L0,10 Z" fill="#c4c4c4"/></svg>
<span class="t" style="left:50px;top:354.34px;font-size:15.2px;color:#b9b9b9;">Solids</span>
<div style="left:198px;top:354.29999999999995px;width:15px;height:15px;background:#151515;"></div>
<div style="left:199px;top:355.29999999999995px;width:13px;height:13px;background:#e6dc52;"></div>
<span class="t" style="left:231.5px;top:354.34px;font-size:15.2px;color:#a6a6a6;">Folder</span>
<div style="left:0px;top:373.5px;width:428px;height:26.7px;background:#252525;"></div>
<div style="left:0px;top:373.5px;width:428px;height:1px;background:#1d1d1d;"></div>
<svg style="left:22px;top:378.5px;" width="23" height="19" viewBox="0 0 23 19"><rect x="0.3" y="0.3" width="22.4" height="18.6" rx="1.6" fill="#c2c2c2"/><ellipse cx="2.3" cy="3.2" rx="0.8" ry="1.2" fill="#2e2e2e"/><ellipse cx="2.3" cy="7.6" rx="0.8" ry="1.2" fill="#2e2e2e"/><ellipse cx="2.3" cy="12.4" rx="0.8" ry="1.2" fill="#2e2e2e"/><ellipse cx="20.6" cy="3.2" rx="0.8" ry="1.2" fill="#2e2e2e"/><ellipse cx="20.6" cy="7.6" rx="0.8" ry="1.2" fill="#2e2e2e"/><ellipse cx="20.6" cy="12.4" rx="0.8" ry="1.2" fill="#2e2e2e"/><rect x="4.2" y="1.5" width="14.6" height="13" fill="#cbcbcb"/><path d="M12.2,6.4 L17.4,6.3 L16.9,12 L13.5,10.6Z" fill="#ff3b3b" stroke="#1d1d1d" stroke-width="0.9"/><circle cx="8.5" cy="7.1" r="2.7" fill="#2f93f2" stroke="#1d1d1d" stroke-width="0.9"/><path d="M6.6,14 L11,7.6 L14.8,14Z" fill="#14a814" stroke="#1d1d1d" stroke-width="0.9"/><rect x="5" y="15.9" width="13" height="1.1" fill="#2a2a2a"/></svg>
<span class="t" style="left:50px;top:381.04px;font-size:15.2px;color:#b9b9b9;">Symbols</span>
<div style="left:198px;top:381.0px;width:15px;height:15px;background:#151515;"></div>
<div style="left:199px;top:382.0px;width:13px;height:13px;background:#ae9b79;"></div>
<span class="t" style="left:231.5px;top:381.04px;font-size:15.2px;color:#a6a6a6;">Composition</span>
<span class="t" style="left:380px;top:381.04px;width:41px;text-align:right;font-size:15.2px;color:#a6a6a6">25</span>
<div style="left:0px;top:400.20000000000005px;width:428px;height:26.7px;background:#232323;"></div>
<div style="left:0px;top:400.20000000000005px;width:428px;height:1px;background:#1d1d1d;"></div>
<svg style="left:23px;top:405.20000000000005px;" width="21" height="17" viewBox="0 0 21 17"><path d="M0.5,3 L0.5,16 L20.5,16 L20.5,4 L9,4 L8,3 Z" fill="#c4c4c4"/><rect x="1" y="0.5" width="6" height="1.5" fill="#c4c4c4"/></svg>
<svg style="left:8px;top:408.20000000000005px;" width="9" height="10" viewBox="0 0 9 10"><path d="M0,0 L9,0 L4.5,10 Z" fill="#c4c4c4"/></svg>
<span class="t" style="left:50px;top:407.74px;font-size:15.2px;color:#b9b9b9;">Symbols Layers</span>
<div style="left:198px;top:407.70000000000005px;width:15px;height:15px;background:#151515;"></div>
<div style="left:199px;top:408.70000000000005px;width:13px;height:13px;background:#e6dc52;"></div>
<span class="t" style="left:231.5px;top:407.74px;font-size:15.2px;color:#a6a6a6;">Folder</span>
</div>
<div style="left:428px;top:297px;width:24px;height:414px;background:#1e1e1e;"></div>
<div style="left:430px;top:323px;width:18px;height:305px;background:#2c2c2c;border-radius:9px"></div>
<svg style="left:430px;top:302px;" width="18" height="17" viewBox="0 0 18 17"><rect x="6" y="0" width="6" height="5" fill="#c4c4c4"/><rect x="0" y="11" width="6" height="6" fill="#c4c4c4"/><rect x="12" y="11" width="6" height="6" fill="#c4c4c4"/><path d="M9,5 L9,8 M3,11 L3,8 L15,8 L15,11" stroke="#c4c4c4" stroke-width="1.5" fill="none"/></svg>
<div style="left:0px;top:711px;width:452px;height:1.5px;background:#0e0e0e;"></div>
<div style="left:0px;top:712.5px;width:452px;height:24px;background:#232323;"></div>
<div style="left:428px;top:712.5px;width:24px;height:24px;background:#1f1f1f;"></div>
<svg style="left:5px;top:716px;" width="24" height="17" viewBox="0 0 24 17"><rect x="6" y="1" width="17" height="11" rx="1" fill="none" stroke="#c4c4c4" stroke-width="1.5"/><rect x="1" y="6" width="6" height="10" fill="#c4c4c4"/><rect x="10" y="4" width="10" height="2" fill="#c4c4c4"/></svg>
<svg style="left:41px;top:717px;" width="19" height="14" viewBox="0 0 19 14"><path d="M0.5,2 L0.5,13.5 L18.5,13.5 L18.5,3 L8,3 L7,2 Z" fill="#c4c4c4"/><rect x="1" y="0" width="5" height="1.5" fill="#c4c4c4"/></svg>
<svg style="left:74px;top:715px;" width="23" height="19" viewBox="0 0 23 19"><rect x="0.3" y="0.3" width="22.4" height="18.6" rx="1.6" fill="#c2c2c2"/><ellipse cx="2.3" cy="3.2" rx="0.8" ry="1.2" fill="#2e2e2e"/><ellipse cx="2.3" cy="7.6" rx="0.8" ry="1.2" fill="#2e2e2e"/><ellipse cx="2.3" cy="12.4" rx="0.8" ry="1.2" fill="#2e2e2e"/><ellipse cx="20.6" cy="3.2" rx="0.8" ry="1.2" fill="#2e2e2e"/><ellipse cx="20.6" cy="7.6" rx="0.8" ry="1.2" fill="#2e2e2e"/><ellipse cx="20.6" cy="12.4" rx="0.8" ry="1.2" fill="#2e2e2e"/><rect x="4.2" y="1.5" width="14.6" height="13" fill="#cbcbcb"/><path d="M12.2,6.4 L17.4,6.3 L16.9,12 L13.5,10.6Z" fill="#ff3b3b" stroke="#1d1d1d" stroke-width="0.9"/><circle cx="8.5" cy="7.1" r="2.7" fill="#2f93f2" stroke="#1d1d1d" stroke-width="0.9"/><path d="M6.6,14 L11,7.6 L14.8,14Z" fill="#14a814" stroke="#1d1d1d" stroke-width="0.9"/><rect x="5" y="15.9" width="13" height="1.1" fill="#2a2a2a"/></svg>
<div style="left:107px;top:714px;width:62px;height:20px;background:#1c1c1c;border-radius:3px;border:1px solid #262626"></div>
<span class="t" style="left:121px;top:718.33px;font-size:14px;color:#a6a6a6;">8 bpc</span>
<svg style="left:180px;top:716px;" width="15" height="17" viewBox="0 0 15 17"><rect x="1.5" y="4" width="12" height="12.5" rx="1" fill="none" stroke="#c4c4c4" stroke-width="1.4"/><path d="M0,3 L15,3 M5,1 L10,1 M5,6.5 L5,14 M7.5,6.5 L7.5,14 M10,6.5 L10,14" stroke="#c4c4c4" stroke-width="1.3"/></svg>
<div style="left:207px;top:713px;width:70px;height:21px;background:#2e2e2e;border-radius:10px"></div>
<svg style="left:471px;top:53px;" width="10" height="10" viewBox="0 0 10 10"><path d="M1,1 L9,9 M9,1 L1,9" stroke="#bdbdbd" stroke-width="1.4"/></svg>
<div style="left:492.5px;top:48.5px;width:16px;height:16px;background:#151515;"></div>
<div style="left:493.5px;top:49.5px;width:14px;height:14px;background:#ae9b79;"></div>
<svg style="left:522px;top:47px;" width="14" height="16" viewBox="0 0 14 16"><path d="M3.5,7 L3.5,4 Q3.5,1 7,1 Q10.5,1 10.5,4" fill="none" stroke="#c8c8c8" stroke-width="1.6"/><rect x="1" y="7" width="12" height="8" fill="#c8c8c8"/><rect x="6" y="9.5" width="2" height="3.5" fill="#222"/></svg>
<span class="t" style="left:548.9px;top:50.37px;font-size:15.5px;color:#a6a6a6;">Composition</span>
<span class="t" style="left:641.4px;top:50.37px;font-size:15.5px;color:#2d8ceb;">Comp 2</span>
<div style="left:709px;top:53.5px;width:11px;height:1.9px;background:#c4c4c4;"></div>
<div style="left:709px;top:57.8px;width:11px;height:1.9px;background:#c4c4c4;"></div>
<div style="left:709px;top:62.1px;width:11px;height:1.9px;background:#c4c4c4;"></div>
<div style="left:457px;top:75px;width:1149px;height:37px;background:#232323;"></div>
<span class="t" style="left:497.3px;top:86.17px;font-size:15.5px;color:#a6a6a6;">Comp 4</span>
<svg style="left:573px;top:88px;" width="8" height="12" viewBox="0 0 8 12"><path d="M6,1 L1.5,6 L6,11" fill="none" stroke="#c8c8c8" stroke-width="1.7"/></svg>
<div style="left:587px;top:80px;width:99.5px;height:25.5px;background:#161616;border-radius:3px;border:1px solid #2c2c2c"></div>
<span class="t" style="left:599.6px;top:86.17px;font-size:15.5px;color:#2d8ceb;">Comp 2</span>
<svg style="left:674.5px;top:88px;" width="8" height="12" viewBox="0 0 8 12"><path d="M6,1 L1.5,6 L6,11" fill="none" stroke="#2d8ceb" stroke-width="1.7"/></svg>
<span class="t" style="left:701.6px;top:86.17px;font-size:15.5px;color:#a6a6a6;">Comp 1</span>
<div style="left:457px;top:112px;width:1149px;height:1.2px;background:#181818;"></div>
<div style="left:457px;top:113.2px;width:1149px;height:1.6px;background:#262626;"></div>
<div style="left:457px;top:114.8px;width:1149px;height:587px;background:#222222;"></div>
<div style="left:512.3px;top:116.3px;width:1039.7px;height:585.7px;background:#1a1a1a;"></div>
<div style="left:513.3px;top:117.3px;width:1036.7px;height:583px;background:#ffffff;"></div>
<svg style="left:0;top:0" width="1920" height="1164" viewBox="0 0 1920 1164"><defs><clipPath id="gc"><circle cx="1024" cy="407.8" r="268"/></clipPath></defs><circle cx="1024" cy="407.8" r="268" fill="#163a5f"/><g clip-path="url(#gc)"><path fill="#45a962" d="M924.7,154.5 L923.0,179.0 L919.8,178.2 L905.1,177.0 L892.0,178.2 L893.7,185.5 L892.8,195.3 L896.9,206.7 L898.5,218.1 L890.4,223.0 L887.1,227.9 L883.9,237.7 L880.6,244.3 L879.0,254.1 L880.6,270.4 L884.7,275.3 L881.4,283.4 L884.7,301.4 L875.7,303.8 L870.8,292.4 L856.1,297.3 L850.4,300.6 L856.1,307.1 L854.5,320.0 L851.2,316.5 L838.1,324.7 L831.6,331.2 L821.8,339.4 L818.6,349.2 L815.3,357.3 L807.1,365.5 L803.9,375.3 L802.2,383.5 L802.2,394.9 L799.0,388.4 L797.3,378.6 L789.2,376.9 L779.4,380.2 L776.1,388.4 L772.9,401.4 L774.5,414.5 L777.8,417.7 L785.9,411.2 L788.4,407.9 L787.5,421.0 L785.9,427.5 L792.4,432.4 L790.8,443.9 L797.3,453.7 L800.6,458.5 L795.7,455.3 L785.9,443.9 L776.1,434.1 L769.6,425.9 L763.1,421.0 L756.5,411.2 L750.0,404.7 L733.7,401.4 L700.0,300.0 L800.0,100.0 L905.0,100.0Z"/><path fill="#45a962" d="M800.6,458.5 L812.0,448.8 L816.9,443.9 L820.2,450.4 L828.4,452.0 L838.1,453.7 L841.4,456.9 L847.9,468.3 L857.7,473.2 L864.3,483.0 L870.8,489.6 L874.1,500.0 L870.8,498.2 L883.9,504.7 L893.7,511.2 L913.2,521.0 L919.8,525.9 L921.4,535.7 L911.6,547.1 L913.2,571.6 L910.0,578.1 L895.3,583.0 L896.9,591.2 L890.4,607.5 L880.6,604.3 L887.1,610.8 L883.9,617.3 L879.0,620.6 L879.0,636.9 L847.9,636.9 L849.6,594.5 L843.0,578.1 L838.1,558.6 L831.6,545.5 L818.6,532.4 L812.0,516.1 L802.2,499.8 L802.2,490.0Z"/><path fill="#45a962" d="M906.7,164.3 L913.2,170.8 L923.0,179.0 L926.3,192.0 L927.9,201.8 L919.8,206.7 L914.9,221.4 L913.2,236.1 L923.0,244.3 L931.2,242.6 L940.0,234.5 L956.3,218.1 L972.6,210.0 L989.0,200.2 L1000.4,192.0 L1005.3,182.2 L1013.5,172.4 L1016.7,162.6 L1028.1,154.5 L1008.6,149.6 L989.0,148.0 L964.5,151.2 L940.0,154.5Z"/><path fill="#45a962" d="M984.1,218.1 L992.2,213.3 L1008.6,211.6 L1014.3,214.9 L1013.5,221.4 L1005.3,224.7 L997.1,226.3 L987.3,223.0Z"/><path fill="#45a962" d="M1078.8,162.6 L1086.9,159.4 L1100.0,157.8 L1111.4,161.0 L1106.5,169.2 L1091.8,170.8 L1082.0,167.5Z"/><path fill="#45a962" d="M1031.4,244.3 L1042.8,241.0 L1047.7,247.5 L1044.5,257.3 L1052.6,265.5 L1057.5,272.0 L1054.3,276.9 L1044.5,280.2 L1031.4,281.8 L1037.9,273.7 L1039.6,265.5 L1034.7,259.0 L1036.3,250.8 L1029.8,247.5Z"/><path fill="#45a962" d="M1018.4,260.6 L1028.1,257.3 L1033.0,260.6 L1033.0,270.4 L1024.9,273.7 L1015.1,273.7 L1016.7,265.5Z"/><path fill="#45a962" d="M793.3,405.5 L799.0,403.4 L806.3,408.8 L812.8,414.5 L810.4,418.1 L803.9,415.3 L797.3,409.9Z"/><path fill="#45a962" d="M813.7,417.7 L820.2,417.7 L823.5,422.6 L818.6,424.3 L813.7,422.6Z"/><path fill="#45a962" d="M1400.0,150.0 L1230.0,150.0 L1230.8,234.5 L1224.3,227.9 L1214.5,221.4 L1207.9,214.9 L1201.4,208.4 L1191.6,205.1 L1183.5,206.7 L1175.3,205.1 L1167.1,206.7 L1159.0,205.1 L1142.6,201.8 L1131.2,196.9 L1119.8,193.7 L1110.0,195.3 L1156.9,205.8 L1150.7,202.7 L1142.5,201.6 L1132.2,198.6 L1121.9,194.4 L1111.5,194.4 L1103.3,197.5 L1096.1,202.7 L1090.9,208.9 L1086.8,215.1 L1078.6,221.2 L1070.3,226.4 L1069.3,233.6 L1072.4,242.9 L1080.6,246.0 L1087.8,241.9 L1083.7,247.0 L1080.6,252.2 L1082.7,263.5 L1072.4,267.6 L1066.2,272.8 L1060.0,276.9 L1100.0,259.0 L1090.2,260.6 L1080.4,263.9 L1070.6,270.4 L1057.5,276.9 L1044.5,283.4 L1037.9,286.7 L1044.5,293.2 L1051.0,303.0 L1044.5,306.3 L1037.9,309.6 L1024.9,311.2 L1018.4,314.5 L1018.4,320.0 L1018.4,323.1 L1015.1,334.5 L1016.7,344.3 L1026.5,344.3 L1028.1,349.2 L1024.9,355.7 L1015.1,363.9 L1011.8,370.4 L1011.8,376.9 L1003.7,385.1 L995.5,388.4 L989.0,398.1 L984.1,406.3 L980.8,417.7 L982.4,430.8 L980.8,448.8 L984.1,456.9 L990.6,465.1 L1000.4,479.8 L1008.6,484.7 L1021.6,492.8 L1037.9,491.2 L1054.3,487.9 L1070.6,486.3 L1078.8,491.2 L1095.1,494.5 L1096.7,500.0 L1086.9,493.3 L1095.1,496.5 L1093.4,506.3 L1090.2,514.5 L1100.0,525.9 L1104.9,534.1 L1108.1,550.4 L1103.2,558.6 L1100.0,574.9 L1106.5,586.3 L1108.1,601.0 L1114.7,612.4 L1113.0,619.0 L1121.2,622.2 L1121.4,622.2 L1142.6,617.3 L1163.9,601.0 L1167.1,591.2 L1178.6,584.7 L1180.2,573.3 L1191.6,561.8 L1199.8,555.3 L1204.7,539.0 L1203.0,530.8 L1204.7,519.4 L1211.2,508.0 L1217.7,503.1 L1229.2,490.0 L1234.1,478.1 L1240.6,465.1 L1243.9,450.4 L1234.1,453.7 L1224.3,456.9 L1230.8,450.4 L1240.6,443.9 L1250.4,434.1 L1260.2,421.0 L1265.9,409.6 L1263.4,403.9 L1256.9,392.4 L1266.7,396.5 L1278.1,394.9 L1283.0,399.8 L1283.0,443.9 L1287.9,456.9 L1322.2,456.9 L1400.0,700.0Z"/><path fill="#45a962" d="M1229.2,537.3 L1230.8,548.8 L1224.3,556.9 L1214.5,574.9 L1206.3,583.0 L1203.0,578.1 L1207.9,568.4 L1209.6,558.6 L1214.5,552.0 L1222.6,545.5Z"/><path fill="#163a5f" d="M821.8,260.6 L826.7,250.8 L834.9,244.3 L844.7,239.4 L854.5,237.7 L864.3,242.6 L867.5,254.1 L864.3,257.3 L854.5,255.7 L847.9,260.6 L843.0,268.8 L838.1,275.3 L834.9,286.7 L831.6,290.0 L830.0,283.4 L831.6,276.9 L826.7,270.4Z"/><path fill="#163a5f" d="M864.3,244.3 L874.1,242.6 L880.6,244.3 L879.8,254.1 L870.8,257.3 L864.3,254.1Z"/><path fill="#163a5f" d="M845.5,227.3 L855.8,210.1 L864.4,203.3 L874.7,195.5 L881.5,190.4 L890.1,189.5 L888.4,194.7 L878.1,198.1 L868.7,205.8 L866.1,211.9 L857.5,218.7 L852.3,227.3Z"/><path fill="#163a5f" d="M821.4,253.1 L830.0,244.5 L847.2,231.6 L857.5,227.3 L866.1,225.6 L878.1,214.4 L881.5,220.4 L876.4,224.7 L869.5,232.5 L862.6,235.9 L855.8,241.1 L847.2,250.0 L830.0,253.1Z"/><path fill="#163a5f" d="M822.6,226.5 L825.8,223.0 L829.1,219.5 L832.4,216.2 L835.7,212.9 L839.2,209.6 L842.7,206.4 L846.2,203.3 L849.8,200.2 L853.5,197.2 L857.2,194.2 L860.9,191.4 L864.7,188.6 L868.6,185.8 L872.5,183.1 L876.4,180.5 L880.4,178.0 L884.4,175.5 L888.5,173.1 L892.6,170.8 L896.8,168.5 L901.0,166.3 L905.2,164.2 L909.5,162.2 L913.8,160.2 L918.1,158.3 L922.5,156.5 L926.9,154.8 L931.3,153.1 L935.8,151.6 L940.3,150.1 L944.8,148.6 L949.3,147.3 L953.9,146.0 L958.4,144.8 L963.0,143.7 L967.7,142.7 L972.3,141.8 L976.9,140.9 L981.6,140.1 L986.3,139.4 L987.1,145.4 L982.5,146.0 L978.0,146.8 L973.4,147.6 L968.9,148.5 L964.4,149.5 L959.9,150.5 L955.4,151.7 L950.9,152.9 L946.5,154.2 L942.0,155.5 L937.6,157.0 L933.3,158.5 L928.9,160.1 L924.6,161.8 L920.3,163.5 L916.1,165.3 L911.8,167.2 L907.6,169.2 L903.5,171.3 L899.4,173.4 L895.3,175.6 L891.2,177.8 L887.2,180.2 L883.3,182.6 L879.3,185.0 L875.5,187.6 L871.6,190.2 L867.8,192.8 L864.1,195.6 L860.4,198.4 L856.7,201.3 L853.1,204.2 L849.6,207.2 L846.1,210.2 L842.7,213.4 L839.3,216.5 L836.0,219.8 L832.7,223.1 L829.5,226.4 L826.3,229.8Z"/><path fill="#163a5f" d="M1087.8,241.9 L1090.9,252.2 L1096.1,258.4 L1101.2,263.5 L1117.7,262.5 L1123.9,259.4 L1121.9,252.2 L1131.1,251.1 L1126.0,243.9 L1140.4,239.8 L1144.5,238.8 L1130.1,237.7 L1119.8,237.7 L1117.7,231.5 L1123.9,218.1 L1119.8,214.0 L1115.7,217.1 L1106.4,229.5 L1107.4,237.7 L1109.5,243.9 L1101.2,252.2 L1096.1,247.0Z"/><path fill="#163a5f" d="M1140.4,207.8 L1152.8,214.0 L1163.1,215.1 L1165.2,219.2 L1157.9,224.3 L1152.8,220.2 L1147.6,213.0Z"/><path fill="#163a5f" d="M1027.1,348.8 L1034.5,347.9 L1045.9,345.5 L1052.4,339.0 L1054.9,328.4 L1065.5,321.8 L1067.9,313.7 L1086.7,310.4 L1093.3,320.2 L1101.4,326.7 L1114.5,331.6 L1118.6,337.3 L1116.1,339.5 L1122.6,335.7 L1124.3,330.8 L1128.3,328.4 L1124.3,321.8 L1114.5,315.3 L1107.9,309.6 L1100.6,302.6 L1109.6,306.3 L1121.0,313.7 L1129.2,320.2 L1132.4,328.4 L1135.7,338.1 L1140.6,346.3 L1145.5,341.4 L1143.9,333.3 L1142.2,328.4 L1148.8,327.5 L1160.2,326.4 L1152.0,331.6 L1155.3,341.4 L1161.8,347.9 L1173.2,346.3 L1189.6,347.9 L1186.3,370.8 L1170.0,371.6 L1148.8,366.7 L1135.7,364.3 L1132.4,374.9 L1122.6,370.8 L1117.7,364.3 L1101.4,361.0 L1096.5,356.9 L1099.0,347.9 L1091.6,343.0 L1075.3,343.0 L1063.9,344.7 L1049.2,348.8 L1045.9,351.2 L1031.2,350.4Z"/><path fill="#163a5f" d="M1181.0,376.9 L1186.7,385.1 L1190.0,380.2 L1191.6,390.0 L1201.4,404.7 L1207.9,412.8 L1209.6,424.3 L1219.4,437.3 L1222.6,448.8 L1224.3,452.0 L1221.0,453.7 L1212.8,439.0 L1204.7,427.5 L1201.4,414.5 L1194.9,401.4 L1186.7,388.4Z"/><path fill="#163a5f" d="M1232.4,378.6 L1237.3,376.9 L1240.6,386.7 L1247.1,394.9 L1253.7,390.0 L1255.3,398.1 L1248.8,401.4 L1243.9,403.0 L1240.6,393.3 L1234.1,385.1Z"/><path fill="#45a962" d="M1103.0,338.1 L1112.8,337.3 L1114.5,344.7 L1107.9,343.9Z"/><path fill="#45a962" d="M1086.7,323.5 L1091.6,323.5 L1092.4,333.3 L1086.7,334.9Z"/><path fill="#45a962" d="M1087.5,315.3 L1090.8,315.3 L1090.0,321.8 L1087.5,321.8Z"/><path fill="#45a962" d="M1147.1,351.2 L1156.9,352.8 L1153.7,355.3 L1148.8,354.5Z"/><path fill="#45a962" d="M1178.1,352.8 L1186.3,349.6 L1183.0,356.1Z"/></g></svg>
<div style="left:457px;top:701.5px;width:1149px;height:2.3px;background:#1b1b1b;"></div>
<div style="left:457px;top:703.8px;width:1149px;height:1px;background:#282828;"></div>
<div style="left:457px;top:704.8px;width:1149px;height:31.2px;background:#232323;"></div>
<svg style="left:464px;top:710px;" width="20" height="18" viewBox="0 0 20 18"><rect x="0.5" y="0.5" width="13" height="10" fill="#c8c8c8"/><path d="M5,3 L10,5.5 L5,8Z" fill="#222"/><path d="M15,3 L15,13 L3,13" fill="none" stroke="#c8c8c8" stroke-width="1.3"/><path d="M18,6 L18,16.5 L6,16.5" fill="none" stroke="#c8c8c8" stroke-width="1.3"/></svg>
<svg style="left:495px;top:710px;" width="18" height="17" viewBox="0 0 18 17"><rect x="0.8" y="0.8" width="16.4" height="11.5" rx="1" fill="none" stroke="#c8c8c8" stroke-width="1.5"/><path d="M4,16 L14,16 L11,14 L7,14Z" fill="#c8c8c8"/></svg>
<div style="left:521px;top:708px;width:96px;height:25px;background:#1b1b1b;border-radius:3px;border:1px solid #2b2b2b"></div>
<span class="t" style="left:529.7px;top:713.47px;font-size:15.5px;color:#a6a6a6;">(76.9%)</span>
<svg style="left:599px;top:719px;" width="10" height="6" viewBox="0 0 10 6"><path d="M1,1 L5.0,5 L9,1" fill="none" stroke="#c8c8c8" stroke-width="1.6"/></svg>
<svg style="left:622px;top:710px;" width="22" height="22" viewBox="0 0 22 22"><rect x="2" y="2" width="17" height="14" fill="none" stroke="#c8c8c8" stroke-width="1.4"/><path d="M10.5,0 L10.5,18 M0,9 L21,9" stroke="#c8c8c8" stroke-width="1.2" stroke-dasharray="2,1.5"/><path d="M14,18 L20,18 L17,21.5Z" fill="#c8c8c8"/></svg>
<div style="left:650px;top:708px;width:30px;height:25px;background:#151515;border-radius:3px"></div>
<svg style="left:654px;top:711px;" width="22" height="19" viewBox="0 0 22 19"><path d="M3,3 L19,2 L17,17 L2,17 Z" fill="none" stroke="#2d8ceb" stroke-width="1.6"/><rect x="1.5" y="1.5" width="3" height="3" fill="#2d8ceb"/><rect x="17.5" y="0.5" width="3" height="3" fill="#2d8ceb"/><rect x="15.5" y="15.5" width="3" height="3" fill="#2d8ceb"/><rect x="0.5" y="15.5" width="3" height="3" fill="#2d8ceb"/></svg>
<div style="left:680px;top:703px;width:98px;height:33px;background:#262626;"></div>
<span class="t" style="left:693.7px;top:713.47px;font-size:15.5px;color:#a6a6a6;">0:00:02:05</span>
<svg style="left:783px;top:711px;" width="22" height="17" viewBox="0 0 22 17"><path d="M1,4 L6,4 L8,1 L14,1 L16,4 L21,4 L21,16 L1,16Z" fill="#c8c8c8"/><circle cx="11" cy="10" r="4" fill="#262626"/><circle cx="11" cy="10" r="2.5" fill="#c8c8c8"/></svg>
<svg style="left:814px;top:710px;" width="22" height="18" viewBox="0 0 22 18"><path d="M1,10 Q11,1 21,10 Q11,19 1,10Z" fill="#3e3e3e"/><circle cx="11" cy="10" r="3.5" fill="#262626"/><circle cx="17" cy="4" r="3.5" fill="none" stroke="#3e3e3e" stroke-width="1.4"/></svg>
<svg style="left:847px;top:709px;" width="20" height="23" viewBox="0 0 20 23"><circle cx="9" cy="5.5" r="4.3" fill="#e52c2c"/><circle cx="5" cy="12" r="4.3" fill="#22b43a"/><circle cx="12.5" cy="12" r="4.3" fill="#2f7ff0"/><path d="M13,18 L19,18 L16,21.5Z" fill="#c8c8c8"/></svg>
<div style="left:872.5px;top:708px;width:120px;height:25px;background:#1b1b1b;border-radius:3px;border:1px solid #2b2b2b"></div>
<span class="t" style="left:882.8px;top:713.47px;font-size:15.5px;color:#a6a6a6;">Full</span>
<svg style="left:974px;top:719px;" width="10" height="6" viewBox="0 0 10 6"><path d="M1,1 L5.0,5 L9,1" fill="none" stroke="#c8c8c8" stroke-width="1.6"/></svg>
<svg style="left:999px;top:711px;" width="20" height="18" viewBox="0 0 20 18"><rect x="0.8" y="0.8" width="18.4" height="16.4" fill="none" stroke="#c8c8c8" stroke-width="1.5"/><rect x="4" y="5" width="12" height="8" fill="#c8c8c8"/></svg>
<svg style="left:1030px;top:711px;" width="20" height="18" viewBox="0 0 20 18"><rect x="0.8" y="0.8" width="18.4" height="16.4" fill="none" stroke="#c8c8c8" stroke-width="1.5"/><rect x="2" y="2" width="4" height="4" fill="#c8c8c8"/><rect x="2" y="10" width="4" height="4" fill="#c8c8c8"/><rect x="6" y="6" width="4" height="4" fill="#c8c8c8"/><rect x="6" y="14" width="4" height="4" fill="#c8c8c8"/><rect x="10" y="2" width="4" height="4" fill="#c8c8c8"/><rect x="10" y="10" width="4" height="4" fill="#c8c8c8"/><rect x="14" y="6" width="4" height="4" fill="#c8c8c8"/><rect x="14" y="14" width="4" height="4" fill="#c8c8c8"/></svg>
<div style="left:1055.5px;top:708px;width:147.5px;height:25px;background:#1b1b1b;border-radius:3px;border:1px solid #2b2b2b"></div>
<span class="t" style="left:1066px;top:713.47px;font-size:15.5px;color:#c0c0c0;">Active Camera</span>
<svg style="left:1185px;top:719px;" width="10" height="6" viewBox="0 0 10 6"><path d="M1,1 L5.0,5 L9,1" fill="none" stroke="#c8c8c8" stroke-width="1.6"/></svg>
<div style="left:1207px;top:708px;width:97px;height:25px;background:#1b1b1b;border-radius:3px;border:1px solid #2b2b2b"></div>
<span class="t" style="left:1217px;top:713.47px;font-size:15.5px;color:#c0c0c0;">1 View</span>
<svg style="left:1286px;top:719px;" width="10" height="6" viewBox="0 0 10 6"><path d="M1,1 L5.0,5 L9,1" fill="none" stroke="#c8c8c8" stroke-width="1.6"/></svg>
<svg style="left:1310px;top:710px;" width="21" height="20" viewBox="0 0 21 20"><path d="M1,5 L20,5 M1,5 L4,2 M1,5 L4,8 M20,5 L17,2 M20,5 L17,8" stroke="#c8c8c8" stroke-width="1.5" fill="none"/><rect x="5.5" y="10" width="10" height="8" fill="none" stroke="#c8c8c8" stroke-width="1.5"/><path d="M10.5,5 L10.5,10" stroke="#c8c8c8" stroke-width="1.5"/></svg>
<div style="left:1337px;top:706px;width:30px;height:27px;background:#1b1b1b;border-radius:3px"></div>
<svg style="left:1341px;top:710px;" width="22" height="20" viewBox="0 0 22 20"><path d="M1,15 L1,1 L20,1 L20,7 M1,15 L8,15" fill="none" stroke="#c8c8c8" stroke-width="1.5"/><path d="M13,3 L8,10 L12,10 L9,17 L16,8 L12,8 Z" fill="#c8c8c8"/><path d="M14,14 L20,14 L17,18Z" fill="#c8c8c8"/></svg>
<svg style="left:1373px;top:710px;" width="20" height="18" viewBox="0 0 20 18"><path d="M1,4 L1,17 L19,17 L19,4" fill="none" stroke="#c8c8c8" stroke-width="1.5"/><rect x="7" y="0" width="6" height="5" fill="#c8c8c8"/><path d="M5,8 L5,17 M10,5 L10,17 M15,8 L15,17" stroke="#c8c8c8" stroke-width="1.5"/></svg>
<svg style="left:1403px;top:709px;" width="20" height="19" viewBox="0 0 20 19"><rect x="7" y="0" width="6" height="5" fill="#c8c8c8"/><rect x="0" y="13" width="6" height="6" fill="#c8c8c8"/><rect x="14" y="13" width="6" height="6" fill="#c8c8c8"/><path d="M10,5 L10,9 M3,13 L3,9 L17,9 L17,13" stroke="#c8c8c8" stroke-width="1.5" fill="none"/></svg>
<div style="left:1430px;top:709px;width:1px;height:22px;background:#2e2e2e;"></div>
<svg style="left:1437px;top:710px;" width="21" height="21" viewBox="0 0 21 21"><circle cx="10.5" cy="10.5" r="9.5" fill="#c8c8c8"/><circle cx="10.5" cy="10.5" r="4" fill="#232323"/><path d="M10.5,1 L13,7 M19.5,9 L14,11 M15,18 L12,14 M3,17 L8,13.5 M2,7 L7,9" stroke="#232323" stroke-width="1.4"/></svg>
<span class="t" style="left:1465.4px;top:713.47px;font-size:15.5px;color:#2d8ceb;">+0.0</span>
<div style="left:1606px;top:38px;width:314px;height:698px;background:#171717;"></div>
<div style="left:1902px;top:38px;width:18px;height:698px;background:#1b1b1b;"></div>
<div style="left:1611px;top:38px;width:291px;height:185px;background:#232323;"></div>
<div style="left:1611px;top:38px;width:291px;height:1.6px;background:#8c8c8c;"></div>
<div style="left:1900.4px;top:38px;width:1.6px;height:37px;background:#8c8c8c;"></div>
<span class="t" style="left:1629.8px;top:49.97px;font-size:15.5px;color:#c9c9c9;">Info</span>
<div style="left:1875px;top:53.5px;width:11px;height:1.9px;background:#c4c4c4;"></div>
<div style="left:1875px;top:57.8px;width:11px;height:1.9px;background:#c4c4c4;"></div>
<div style="left:1875px;top:62.1px;width:11px;height:1.9px;background:#c4c4c4;"></div>
<div style="left:1621.5px;top:101px;width:28px;height:28px;background:#000;"></div>
<span class="t" style="left:1658px;top:86.28px;font-size:14.5px;color:#a6a6a6;">R :</span>
<span class="t" style="left:1658px;top:104.68px;font-size:14.5px;color:#a6a6a6;">G :</span>
<span class="t" style="left:1658px;top:123.08px;font-size:14.5px;color:#a6a6a6;">B :</span>
<span class="t" style="left:1658px;top:141.48px;font-size:14.5px;color:#a6a6a6;">A :</span>
<span class="t" style="left:1685px;top:141.58px;font-size:14.5px;color:#a6a6a6;">0</span>
<div style="left:1753px;top:88px;width:1.2px;height:68px;background:#2f2f2f;"></div>
<svg style="left:1766px;top:115px;" width="15" height="15" viewBox="0 0 15 15"><path d="M7.5,0 L7.5,15 M0,7.5 L15,7.5" stroke="#c8c8c8" stroke-width="1.4"/></svg>
<span class="t" style="left:1785.7px;top:84.88px;font-size:14.5px;color:#a6a6a6;">X : 217</span>
<span class="t" style="left:1785.7px;top:103.38px;font-size:14.5px;color:#a6a6a6;">Y :  1057</span>
<div style="left:1619px;top:167px;width:281px;height:1.2px;background:#2d2d2d;"></div>
<span class="t" style="left:1621.5px;top:174.94px;font-size:15.2px;color:#a6a6a6;">Time Navigator Brackets</span>
<span class="t" style="left:1621.5px;top:195.03px;font-size:15px;color:#a6a6a6;">Start: 0:00:01:23, End: 0:00:03:00</span>
<div style="left:1611px;top:226px;width:291px;height:38px;background:#232323;"></div>
<div style="left:1611px;top:226px;width:291px;height:1.6px;background:#7a7a7a;"></div>
<div style="left:1900.4px;top:226px;width:1.6px;height:37px;background:#7a7a7a;"></div>
<div style="left:1611px;top:263px;width:291px;height:1px;background:#151515;"></div>
<span class="t" style="left:1629.8px;top:237.27px;font-size:15.5px;color:#a6a6a6;">Preview</span>
<div style="left:1611px;top:268px;width:291px;height:38px;background:#232323;"></div>
<div style="left:1611px;top:268px;width:291px;height:1.6px;background:#7a7a7a;"></div>
<div style="left:1900.4px;top:268px;width:1.6px;height:37px;background:#7a7a7a;"></div>
<div style="left:1611px;top:305px;width:291px;height:1px;background:#151515;"></div>
<span class="t" style="left:1629.8px;top:279.27px;font-size:15.5px;color:#a6a6a6;">Effects &amp; Presets</span>
<div style="left:1611px;top:310px;width:291px;height:38px;background:#232323;"></div>
<div style="left:1611px;top:310px;width:291px;height:1.6px;background:#7a7a7a;"></div>
<div style="left:1900.4px;top:310px;width:1.6px;height:37px;background:#7a7a7a;"></div>
<div style="left:1611px;top:347px;width:291px;height:1px;background:#151515;"></div>
<span class="t" style="left:1629.8px;top:321.27px;font-size:15.5px;color:#a6a6a6;">Motion Sketch</span>
<div style="left:1611px;top:352px;width:291px;height:232px;background:#232323;"></div>
<div style="left:1611px;top:352px;width:291px;height:1.6px;background:#7a7a7a;"></div>
<div style="left:1900.4px;top:352px;width:1.6px;height:37px;background:#7a7a7a;"></div>
<span class="t" style="left:1629.8px;top:362.97px;font-size:15.5px;color:#c9c9c9;">Wiggler</span>
<div style="left:1875px;top:366.5px;width:11px;height:1.9px;background:#c4c4c4;"></div>
<div style="left:1875px;top:370.8px;width:11px;height:1.9px;background:#c4c4c4;"></div>
<div style="left:1875px;top:375.1px;width:11px;height:1.9px;background:#c4c4c4;"></div>
<span class="t" style="left:1642.4px;top:408.97px;font-size:15.5px;color:#a6a6a6;">Apply To:</span>
<div style="left:1716px;top:403px;width:175px;height:26px;background:#262626;border-radius:3px"></div>
<span class="t" style="left:1727px;top:408.97px;font-size:15.5px;color:#4e4e4e;">Temporal Graph</span>
<svg style="left:1872px;top:413px;" width="10" height="6" viewBox="0 0 10 6"><path d="M1,1 L5.0,5 L9,1" fill="none" stroke="#4a4a4a" stroke-width="1.6"/></svg>
<span class="t" style="left:1627px;top:437.77px;font-size:15.5px;color:#a6a6a6;">Noise Type:</span>
<div style="left:1716px;top:434px;width:175px;height:25.5px;background:#191919;border-radius:3px;border:1px solid #3a3a3a"></div>
<span class="t" style="left:1726.6px;top:438.97px;font-size:15.5px;color:#e0e0e0;">Smooth</span>
<svg style="left:1873px;top:443px;" width="11" height="7" viewBox="0 0 11 7"><path d="M1,1 L5.5,6 L10,1" fill="none" stroke="#e0e0e0" stroke-width="1.8"/></svg>
<span class="t" style="left:1624.8px;top:468.27px;font-size:15.5px;color:#a6a6a6;">Dimensions:</span>
<div style="left:1716px;top:465px;width:175px;height:25px;background:#262626;border-radius:3px"></div>
<svg style="left:1872px;top:475px;" width="10" height="6" viewBox="0 0 10 6"><path d="M1,1 L5.0,5 L9,1" fill="none" stroke="#4a4a4a" stroke-width="1.6"/></svg>
<span class="t" style="left:1631.6px;top:498.87px;font-size:15.5px;color:#a6a6a6;">Frequency:</span>
<span class="t" style="left:1718px;top:497.97px;font-size:15.5px;color:#2d8ceb;">5.0</span>
<span class="t" style="left:1768px;top:498.87px;font-size:15.5px;color:#a6a6a6;">per second</span>
<span class="t" style="left:1631.2px;top:529.37px;font-size:15.5px;color:#a6a6a6;">Magnitude:</span>
<span class="t" style="left:1718px;top:530.33px;font-size:14px;color:#4e4e4e;">1.0</span>
<div style="left:1787.6px;top:546px;width:103.5px;height:27.5px;background:#262626;border-radius:14px"></div>
<span class="t" style="left:1819px;top:551.97px;font-size:15.5px;color:#4e4e4e;">Apply</span>
<div style="left:1611px;top:587px;width:291px;height:38px;background:#232323;"></div>
<div style="left:1611px;top:587px;width:291px;height:1.6px;background:#7a7a7a;"></div>
<div style="left:1900.4px;top:587px;width:1.6px;height:37px;background:#7a7a7a;"></div>
<div style="left:1611px;top:624px;width:291px;height:1px;background:#151515;"></div>
<span class="t" style="left:1629.8px;top:597.97px;font-size:15.5px;color:#a6a6a6;">Smoother</span>
<div style="left:1611px;top:629px;width:291px;height:107px;background:#232323;"></div>
<span class="t" style="left:1629.8px;top:639.67px;font-size:15.5px;color:#c9c9c9;">Audio</span>
<div style="left:1875px;top:643.0px;width:11px;height:1.9px;background:#c4c4c4;"></div>
<div style="left:1875px;top:647.3px;width:11px;height:1.9px;background:#c4c4c4;"></div>
<div style="left:1875px;top:651.6px;width:11px;height:1.9px;background:#c4c4c4;"></div>
<div style="left:1622.5px;top:677px;width:37.5px;height:6px;background:#000;border:1px solid #3a3a3a"></div>
<div style="left:1622.5px;top:684px;width:37.5px;height:52px;background:linear-gradient(#7a1f1f,#6f6a1f)"></div>
<div style="left:1640px;top:684px;width:1.6px;height:52px;background:#000;"></div>
<span class="t" style="left:1674.6px;top:688.53px;font-size:14px;color:#a6a6a6;">0.0</span>
<span class="t" style="left:1670.6px;top:717.33px;font-size:14px;color:#a6a6a6;">-3.0</span>
<div style="left:1740px;top:695px;width:1.5px;height:41px;background:#4a4a4a;"></div>
<div style="left:1773px;top:699px;width:1.5px;height:37px;background:#4a4a4a;"></div>
<div style="left:1806px;top:695px;width:1.5px;height:41px;background:#4a4a4a;"></div>
<span class="t" style="left:1828px;top:687.33px;font-size:14px;color:#a6a6a6;">12.0 dB</span>
<span class="t" style="left:1828px;top:716.33px;font-size:14px;color:#a6a6a6;">9.0</span>
<div style="left:1903px;top:38px;width:15px;height:295px;background:#323232;border-radius:7.5px"></div>
<div style="left:0px;top:741px;width:1920px;height:423px;background:#232323;"></div>
<div style="left:35px;top:752px;width:15px;height:15px;background:#ae9b79;"></div>
<span class="t" style="left:66.5px;top:753.47px;font-size:15.5px;color:#a6a6a6;">Comp 1</span>
<svg style="left:173px;top:757px;" width="9" height="9" viewBox="0 0 9 9"><path d="M1,1 L8,8 M8,1 L1,8" stroke="#bdbdbd" stroke-width="1.3"/></svg>
<div style="left:194px;top:752px;width:15px;height:15px;background:#ae9b79;"></div>
<span class="t" style="left:225px;top:753.47px;font-size:15.5px;color:#c9c9c9;">Comp 2</span>
<div style="left:294px;top:756.0px;width:12px;height:1.9px;background:#c4c4c4;"></div>
<div style="left:294px;top:760.3px;width:12px;height:1.9px;background:#c4c4c4;"></div>
<div style="left:294px;top:764.6px;width:12px;height:1.9px;background:#c4c4c4;"></div>
<div style="left:173px;top:775px;width:133px;height:3px;background:#cfcfcf;border-radius:2px"></div>
<div style="left:357px;top:752px;width:15px;height:15px;background:#ae9b79;"></div>
<span class="t" style="left:388px;top:753.47px;font-size:15.5px;color:#a6a6a6;">Comp 4</span>
<span class="t" style="left:525px;top:753.47px;font-size:15.5px;color:#a6a6a6;">Render Queue</span>
<span class="t" style="left:13.5px;top:783.18px;font-size:23px;color:#2d8ceb;font-weight:700;letter-spacing:0.6px;">0:00:02:05</span>
<span class="t" style="left:16px;top:810.28px;font-size:13.5px;color:#1f6fc0;">00055 (25.00 fps)</span>
<div style="left:146px;top:791.5px;width:403px;height:27px;background:#141414;border-radius:4px;border:1px solid #262626"></div>
<svg style="left:155px;top:797px;" width="20" height="17" viewBox="0 0 20 17"><circle cx="11" cy="6.5" r="4.8" fill="none" stroke="#cfcfcf" stroke-width="1.5"/><path d="M7.5,10 L1.5,16" stroke="#cfcfcf" stroke-width="1.6"/><path d="M14,12 L20,12 L17,15.5Z" fill="#cfcfcf"/></svg>
<svg style="left:572px;top:796px;" width="24" height="20" viewBox="0 0 24 20"><path d="M0,3 L10,3" stroke="#c8c8c8" stroke-width="1.6"/><rect x="3" y="1" width="5" height="4" fill="#c8c8c8"/><path d="M11,3 L11,14 L15,14 M11,8 L15,8" stroke="#c8c8c8" stroke-width="1.4" fill="none"/><rect x="15" y="1" width="6" height="4" fill="#c8c8c8"/><rect x="15" y="6" width="6" height="4" fill="#c8c8c8"/><rect x="15" y="12" width="6" height="4" fill="#c8c8c8"/><path d="M15,17 L21,17 L18,20Z" fill="#c8c8c8"/></svg>
<svg style="left:618px;top:793px;" width="25" height="24" viewBox="0 0 25 24"><path d="M5,0 L5,10 M0,5 L10,5 M1.5,1.5 L8.5,8.5 M8.5,1.5 L1.5,8.5" stroke="#c8c8c8" stroke-width="1.4"/><path d="M16,9 L23,12.5 L23,20 L16,23.5 L9,20 L9,12.5Z M9,12.5 L16,16 L23,12.5 M16,16 L16,23.5" fill="none" stroke="#c8c8c8" stroke-width="1.5"/></svg>
<svg style="left:666px;top:797px;" width="24" height="18" viewBox="0 0 24 18"><path d="M5,8 Q5,1 12,1 Q19,1 19,8Z" fill="#c8c8c8"/><rect x="0" y="9" width="24" height="3" fill="#c8c8c8"/><rect x="10" y="8" width="4" height="9" fill="#c8c8c8"/><rect x="3" y="14" width="18" height="2" fill="#c8c8c8"/><circle cx="9.5" cy="5" r="1" fill="#222"/><circle cx="14.5" cy="5" r="1" fill="#222"/></svg>
<svg style="left:704px;top:795px;" width="21" height="21" viewBox="0 0 21 21"><rect x="5" y="1" width="15" height="15" fill="#c8c8c8"/><rect x="1" y="5" width="4" height="15" fill="none" stroke="#c8c8c8" stroke-width="1.3"/><rect x="9" y="7" width="7" height="3" fill="#222"/><path d="M1,20 L16,20" stroke="#c8c8c8" stroke-width="1.4"/></svg>
<svg style="left:741px;top:796px;" width="22" height="21" viewBox="0 0 22 21"><circle cx="8" cy="13" r="6.5" fill="none" stroke="#c8c8c8" stroke-width="1.4"/><circle cx="11" cy="10" r="6.5" fill="#232323" stroke="#c8c8c8" stroke-width="1.4"/><circle cx="14" cy="7" r="6.5" fill="#666" stroke="#c8c8c8" stroke-width="1.4"/></svg>
<svg style="left:788px;top:793px;" width="24" height="23" viewBox="0 0 24 23"><rect x="3" y="4" width="20" height="18" fill="none" stroke="#c8c8c8" stroke-width="1.5"/><path d="M7,1 L7,4 M12,1 L12,4 M17,1 L17,4 M0,9 L3,9 M0,14 L3,14 M0,19 L3,19" stroke="#c8c8c8" stroke-width="1.3"/><path d="M6,9 Q11,9 13,14 Q15,18 20,18" fill="none" stroke="#c8c8c8" stroke-width="1.5"/></svg>
<div style="left:0px;top:830px;width:833px;height:1.5px;background:#0c0c0c;"></div>
<div style="left:0px;top:831.5px;width:833px;height:25px;background:#333333;"></div>
<div style="left:0px;top:856.3px;width:833px;height:1.7px;background:#0c0c0c;"></div>
<svg style="left:7px;top:839px;" width="16" height="11" viewBox="0 0 16 11"><path d="M1,5.5 Q8,-1 15,5.5 Q8,12 1,5.5Z" fill="#c8c8c8"/><circle cx="8" cy="5.5" r="2.6" fill="#333"/></svg>
<svg style="left:27px;top:837px;" width="18" height="15" viewBox="0 0 18 15"><path d="M1,4.5 L4,4.5 L8.5,1 L8.5,14 L4,10.5 L1,10.5Z" fill="#c8c8c8"/><path d="M11,3.5 Q14,7.5 11,11.5 M13,1.5 Q18,7.5 13,13.5" fill="none" stroke="#c8c8c8" stroke-width="1.5"/></svg>
<svg style="left:51px;top:839px;" width="11" height="11" viewBox="0 0 11 11"><circle cx="5.5" cy="5.5" r="5.3" fill="#c8c8c8"/></svg>
<svg style="left:71px;top:836px;" width="14" height="16" viewBox="0 0 14 16"><path d="M3.5,7 L3.5,4.5 Q3.5,1 7,1 Q10.5,1 10.5,4.5 L10.5,7" fill="none" stroke="#c8c8c8" stroke-width="1.7"/><rect x="1" y="7" width="12" height="9" fill="#c8c8c8"/><rect x="6" y="9.5" width="2" height="4" fill="#333"/></svg>
<div style="left:94px;top:837px;width:1.6px;height:16px;background:#151515;"></div>
<div style="left:139px;top:837px;width:1.6px;height:16px;background:#151515;"></div>
<div style="left:185px;top:837px;width:1.6px;height:16px;background:#151515;"></div>
<div style="left:355px;top:837px;width:1.6px;height:16px;background:#151515;"></div>
<div style="left:548px;top:837px;width:1.6px;height:16px;background:#151515;"></div>
<div style="left:712px;top:837px;width:1.6px;height:16px;background:#151515;"></div>
<div style="left:810px;top:837px;width:1.6px;height:16px;background:#151515;"></div>
<svg style="left:114px;top:837px;" width="17" height="17" viewBox="0 0 17 17"><path d="M1,1 L8,1 L16,9 L9,16 L1,8Z" fill="#c8c8c8"/><circle cx="5" cy="5" r="1.5" fill="#333"/></svg>
<span class="t" style="left:148px;top:838.24px;font-size:13px;color:#8a8a8a;">#</span>
<span class="t" style="left:194px;top:837.78px;font-size:13.5px;color:#a6a6a6;">Layer Name</span>
<svg style="left:362px;top:837px;" width="19" height="15" viewBox="0 0 19 15"><path d="M3,8 Q3,1 9.5,1 Q16,1 16,8Z" fill="#c8c8c8"/><rect x="0" y="8" width="19" height="2" fill="#c8c8c8"/><rect x="8" y="8" width="3" height="6" fill="#c8c8c8"/><rect x="2" y="12" width="15" height="1.6" fill="#c8c8c8"/><circle cx="7" cy="5" r="1" fill="#333"/><circle cx="12" cy="5" r="1" fill="#333"/></svg>
<svg style="left:385px;top:837px;" width="15" height="15" viewBox="0 0 15 15"><circle cx="7.5" cy="7.5" r="3.5" fill="none" stroke="#c8c8c8" stroke-width="1.4"/><path d="M7.5,0 L7.5,2.5 M7.5,12.5 L7.5,15 M0,7.5 L2.5,7.5 M12.5,7.5 L15,7.5 M2,2 L3.8,3.8 M11.2,11.2 L13,13 M13,2 L11.2,3.8 M3.8,11.2 L2,13" stroke="#c8c8c8" stroke-width="1.4"/></svg>
<svg style="left:405px;top:836px;" width="16" height="16" viewBox="0 0 16 16"><path d="M1,1 L15,15" stroke="#c8c8c8" stroke-width="2" stroke-dasharray="2,1.3"/></svg>
<span class="t" style="left:426px;top:835.52px;font-size:16px;color:#c8c8c8;font-family:'Liberation Serif',serif;"><i>fx</i></span>
<svg style="left:446px;top:836px;" width="18" height="17" viewBox="0 0 18 17"><rect x="3" y="1" width="14" height="13" fill="none" stroke="#c8c8c8" stroke-width="1.3"/><rect x="6" y="3" width="8" height="9" fill="#c8c8c8"/><rect x="8" y="6.5" width="4" height="2" fill="#333"/><path d="M1,4 L1,16 L14,16" fill="none" stroke="#c8c8c8" stroke-width="1.3"/></svg>
<svg style="left:467px;top:835px;" width="20" height="19" viewBox="0 0 20 19"><circle cx="7" cy="12" r="6" fill="none" stroke="#c8c8c8" stroke-width="1.3"/><circle cx="10" cy="10" r="6" fill="#333" stroke="#c8c8c8" stroke-width="1.3"/><circle cx="13" cy="7" r="6" fill="#6a6a6a" stroke="#c8c8c8" stroke-width="1.3"/></svg>
<svg style="left:488px;top:837px;" width="16" height="16" viewBox="0 0 16 16"><circle cx="8" cy="8" r="7.3" fill="#c8c8c8"/><path d="M3,13 L13,3 A7,7 0 0 0 3,13Z" fill="#333"/></svg>
<svg style="left:508px;top:836px;" width="18" height="18" viewBox="0 0 18 18"><path d="M9,1 L17,5 L17,13 L9,17 L1,13 L1,5Z M1,5 L9,9 L17,5 M9,9 L9,17" fill="none" stroke="#c8c8c8" stroke-width="1.4"/></svg>
<span class="t" style="left:557.5px;top:837.78px;font-size:13.5px;color:#a6a6a6;">Parent</span>
<span class="t" style="left:722px;top:837.78px;font-size:13.5px;color:#a6a6a6;">Duration</span>
<div style="left:0px;top:858px;width:833px;height:22.5px;background:#2b2b2b;"></div>
<div style="left:5px;top:860px;width:18px;height:18px;background:#1b1b1b;"></div>
<svg style="left:7px;top:864px;" width="16" height="11" viewBox="0 0 16 11"><path d="M1,5.5 Q8,-1 15,5.5 Q8,12 1,5.5Z" fill="#c8c8c8"/><circle cx="8" cy="5.5" r="2.6" fill="#2b2b2b"/></svg>
<div style="left:48px;top:860px;width:17px;height:18px;background:#242424;"></div>
<div style="left:68px;top:860px;width:18px;height:18px;background:#242424;"></div>
<svg style="left:102px;top:866px;" width="9" height="10" viewBox="0 0 9 10"><path d="M0,0 L9,0 L4.5,10 Z" fill="#c4c4c4"/></svg>
<div style="left:119px;top:861px;width:17px;height:17px;background:#ae9b79;"></div>
<span class="t" style="left:148px;top:861.47px;font-size:15.5px;color:#c9c9c9;">1</span>
<svg style="left:188px;top:860px;" width="23" height="19" viewBox="0 0 23 19"><rect x="0.3" y="0.3" width="22.4" height="18.6" rx="1.6" fill="#c2c2c2"/><ellipse cx="2.3" cy="3.2" rx="0.8" ry="1.2" fill="#2e2e2e"/><ellipse cx="2.3" cy="7.6" rx="0.8" ry="1.2" fill="#2e2e2e"/><ellipse cx="2.3" cy="12.4" rx="0.8" ry="1.2" fill="#2e2e2e"/><ellipse cx="20.6" cy="3.2" rx="0.8" ry="1.2" fill="#2e2e2e"/><ellipse cx="20.6" cy="7.6" rx="0.8" ry="1.2" fill="#2e2e2e"/><ellipse cx="20.6" cy="12.4" rx="0.8" ry="1.2" fill="#2e2e2e"/><rect x="4.2" y="1.5" width="14.6" height="13" fill="#cbcbcb"/><path d="M12.2,6.4 L17.4,6.3 L16.9,12 L13.5,10.6Z" fill="#ff3b3b" stroke="#1d1d1d" stroke-width="0.9"/><circle cx="8.5" cy="7.1" r="2.7" fill="#2f93f2" stroke="#1d1d1d" stroke-width="0.9"/><path d="M6.6,14 L11,7.6 L14.8,14Z" fill="#14a814" stroke="#1d1d1d" stroke-width="0.9"/><rect x="5" y="15.9" width="13" height="1.1" fill="#2a2a2a"/></svg>
<span class="t" style="left:217px;top:861.97px;font-size:15.5px;color:#c9c9c9;">[Comp 1]</span>
<div style="left:362px;top:860px;width:18px;height:18px;background:#1e1e1e;"></div>
<svg style="left:362px;top:862px;" width="19" height="15" viewBox="0 0 19 15"><path d="M3,8 Q3,1 9.5,1 Q16,1 16,8Z" fill="#c8c8c8"/><rect x="0" y="8" width="19" height="2" fill="#c8c8c8"/><rect x="8" y="8" width="3" height="6" fill="#c8c8c8"/><rect x="2" y="12" width="15" height="1.6" fill="#c8c8c8"/><circle cx="7" cy="5" r="1" fill="#333"/><circle cx="12" cy="5" r="1" fill="#333"/></svg>
<div style="left:384px;top:860px;width:17px;height:18px;background:#242424;"></div>
<div style="left:405px;top:860px;width:17px;height:18px;background:#242424;"></div>
<svg style="left:406px;top:861px;" width="16" height="16" viewBox="0 0 16 16"><path d="M2,15 L15,2" stroke="#c8c8c8" stroke-width="1.8"/></svg>
<div style="left:468px;top:860px;width:18px;height:18px;background:#242424;"></div>
<div style="left:489px;top:860px;width:18px;height:18px;background:#242424;"></div>
<div style="left:510px;top:860px;width:18px;height:18px;background:#242424;"></div>
<svg style="left:555px;top:860px;" width="18" height="17" viewBox="0 0 18 17"><path d="M9,8.5 m0,0 a1.5,1.5 0 1 1 2,1 a4,4 0 1 1 -5,-4 a6.5,6.5 0 1 1 -3,8" fill="none" stroke="#c8c8c8" stroke-width="1.5"/></svg>
<div style="left:581.5px;top:859.5px;width:123.5px;height:19px;background:#1b1b1b;"></div>
<span class="t" style="left:591.7px;top:861.97px;font-size:15.5px;color:#d0d0d0;">None</span>
<svg style="left:688px;top:866px;" width="11" height="7" viewBox="0 0 11 7"><path d="M1,1 L5.5,6 L10,1" fill="none" stroke="#d0d0d0" stroke-width="1.7"/></svg>
<span class="t" style="left:723.5px;top:861.92px;font-size:15px;color:#2d8ceb;">0:00:03:00</span>
<div style="left:0px;top:881px;width:833px;height:24px;background:#262626;"></div>
<div style="left:0px;top:904px;width:833px;height:1px;background:#1f1f1f;"></div>
<div style="left:0px;top:905px;width:833px;height:24px;background:#262626;"></div>
<div style="left:0px;top:928px;width:833px;height:1px;background:#1f1f1f;"></div>
<div style="left:0px;top:929px;width:833px;height:24px;background:#262626;"></div>
<div style="left:0px;top:952px;width:833px;height:1px;background:#1f1f1f;"></div>
<div style="left:0px;top:953px;width:833px;height:24px;background:#262626;"></div>
<div style="left:0px;top:976px;width:833px;height:1px;background:#1f1f1f;"></div>
<div style="left:0px;top:977px;width:833px;height:24px;background:#262626;"></div>
<div style="left:0px;top:1000px;width:833px;height:1px;background:#1f1f1f;"></div>
<div style="left:0px;top:1001px;width:833px;height:24px;background:#262626;"></div>
<div style="left:0px;top:1024px;width:833px;height:1px;background:#1f1f1f;"></div>
<div style="left:0px;top:1025px;width:833px;height:24px;background:#262626;"></div>
<div style="left:0px;top:1048px;width:833px;height:1px;background:#1f1f1f;"></div>
<svg style="left:127px;top:888px;" width="10" height="10" viewBox="0 0 10 10"><path d="M0,0 L10,5.0 L0,10 Z" fill="#c4c4c4"/></svg>
<span class="t" style="left:150.5px;top:886.97px;font-size:15.5px;color:#a6a6a6;">Masks</span>
<svg style="left:127px;top:912px;" width="9" height="10" viewBox="0 0 9 10"><path d="M0,0 L9,0 L4.5,10 Z" fill="#c4c4c4"/></svg>
<span class="t" style="left:150.5px;top:910.97px;font-size:15.5px;color:#a6a6a6;">Transform</span>
<span class="t" style="left:364px;top:909.97px;font-size:15.5px;color:#2d8ceb;">Reset</span>
<div style="left:154px;top:940px;width:2px;height:2px;background:#444;"></div>
<svg style="left:169.5px;top:933px;" width="17" height="17" viewBox="0 0 17 17"><circle cx="8.5" cy="9.5" r="6.5" fill="none" stroke="#c8c8c8" stroke-width="1.6"/><path d="M6,1.2 L11,1.2 M8.5,1.2 L8.5,3" stroke="#c8c8c8" stroke-width="1.6"/><path d="M3,4 L4.5,2.5 M14,4 L12.5,2.5" stroke="#c8c8c8" stroke-width="1.4"/></svg>
<span class="t" style="left:196.4px;top:934.67px;font-size:15.5px;color:#a6a6a6;">Anchor Point</span>
<span class="t" style="left:364px;top:934.12px;font-size:15px;color:#2d8ceb;">2639.7,543.0</span>
<div style="left:154px;top:964px;width:2px;height:2px;background:#444;"></div>
<div style="left:167px;top:955px;width:22px;height:21px;background:#1c1c1c;"></div>
<svg style="left:169.5px;top:957px;" width="17" height="17" viewBox="0 0 17 17"><circle cx="8.5" cy="9.5" r="6.5" fill="none" stroke="#2d8ceb" stroke-width="1.6"/><path d="M6,1.2 L11,1.2 M8.5,1.2 L8.5,3" stroke="#2d8ceb" stroke-width="1.6"/><path d="M3,4 L4.5,2.5 M14,4 L12.5,2.5" stroke="#2d8ceb" stroke-width="1.4"/><path d="M8.5,9.5 L11,6" stroke="#2d8ceb" stroke-width="1.4"/></svg>
<svg style="left:195px;top:957px;" width="17" height="15" viewBox="0 0 17 15"><path d="M1,0 L1,14 L16,14" fill="none" stroke="#c8c8c8" stroke-width="1.5"/><path d="M3,5 L6,11 L10,7 L15,10" fill="none" stroke="#c8c8c8" stroke-width="1.4"/></svg>
<span class="t" style="left:223px;top:958.67px;font-size:15.5px;color:#a6a6a6;">Position</span>
<svg style="left:9px;top:960px;" width="8" height="11" viewBox="0 0 8 11"><path d="M8,0 L0,5.5 L8,11Z" fill="#4e4e4e"/></svg>
<div style="left:26px;top:956px;width:18px;height:18px;background:#1c1c1c;"></div>
<svg style="left:29px;top:959px;" width="12" height="12" viewBox="0 0 12 12"><path d="M6,0 L12,6 L6,12 L0,6Z" fill="#2d8ceb"/></svg>
<svg style="left:52px;top:960px;" width="8" height="11" viewBox="0 0 8 11"><path d="M0,0 L8,5.5 L0,11Z" fill="#c8c8c8"/></svg>
<span class="t" style="left:364px;top:958.12px;font-size:15px;color:#2d8ceb;">951.7,538.0</span>
<div style="left:154px;top:988px;width:2px;height:2px;background:#444;"></div>
<div style="left:167px;top:979px;width:22px;height:21px;background:#1c1c1c;"></div>
<svg style="left:169.5px;top:981px;" width="17" height="17" viewBox="0 0 17 17"><circle cx="8.5" cy="9.5" r="6.5" fill="none" stroke="#2d8ceb" stroke-width="1.6"/><path d="M6,1.2 L11,1.2 M8.5,1.2 L8.5,3" stroke="#2d8ceb" stroke-width="1.6"/><path d="M3,4 L4.5,2.5 M14,4 L12.5,2.5" stroke="#2d8ceb" stroke-width="1.4"/><path d="M8.5,9.5 L11,6" stroke="#2d8ceb" stroke-width="1.4"/></svg>
<svg style="left:195px;top:981px;" width="17" height="15" viewBox="0 0 17 15"><path d="M1,0 L1,14 L16,14" fill="none" stroke="#c8c8c8" stroke-width="1.5"/><path d="M3,5 L6,11 L10,7 L15,10" fill="none" stroke="#c8c8c8" stroke-width="1.4"/></svg>
<span class="t" style="left:223px;top:982.67px;font-size:15.5px;color:#a6a6a6;">Scale</span>
<svg style="left:9px;top:984px;" width="8" height="11" viewBox="0 0 8 11"><path d="M8,0 L0,5.5 L8,11Z" fill="#4e4e4e"/></svg>
<div style="left:26px;top:980px;width:18px;height:18px;background:#1c1c1c;"></div>
<svg style="left:29px;top:983px;" width="12" height="12" viewBox="0 0 12 12"><path d="M6,0 L12,6 L6,12 L0,6Z" fill="#2d8ceb"/></svg>
<svg style="left:52px;top:984px;" width="8" height="11" viewBox="0 0 8 11"><path d="M0,0 L8,5.5 L0,11Z" fill="#c8c8c8"/></svg>
<div style="left:361px;top:980px;width:20px;height:18px;background:#1a1a1a;"></div>
<svg style="left:362px;top:984px;" width="18" height="10" viewBox="0 0 18 10"><path d="M7,2 L3,2 Q1,2 1,5 Q1,8 3,8 L7,8 M11,2 L15,2 Q17,2 17,5 Q17,8 15,8 L11,8 M5,5 L13,5" fill="none" stroke="#d0d0d0" stroke-width="1.6"/></svg>
<span class="t" style="left:387px;top:982.62px;font-size:15px;color:#2d8ceb;">100.0,100.0</span>
<span class="t" style="left:466px;top:982.62px;font-size:15px;color:#a6a6a6;">%</span>
<div style="left:154px;top:1012px;width:2px;height:2px;background:#444;"></div>
<svg style="left:169.5px;top:1005px;" width="17" height="17" viewBox="0 0 17 17"><circle cx="8.5" cy="9.5" r="6.5" fill="none" stroke="#c8c8c8" stroke-width="1.6"/><path d="M6,1.2 L11,1.2 M8.5,1.2 L8.5,3" stroke="#c8c8c8" stroke-width="1.6"/><path d="M3,4 L4.5,2.5 M14,4 L12.5,2.5" stroke="#c8c8c8" stroke-width="1.4"/></svg>
<span class="t" style="left:196.4px;top:1006.67px;font-size:15.5px;color:#a6a6a6;">Rotation</span>
<span class="t" style="left:364px;top:1005.67px;font-size:15.5px;color:#2d8ceb;">0</span>
<span class="t" style="left:374px;top:1005.67px;font-size:15.5px;color:#a6a6a6;">x</span>
<span class="t" style="left:384px;top:1005.67px;font-size:15.5px;color:#2d8ceb;">+0.0</span>
<span class="t" style="left:416px;top:1005.94px;font-size:13px;color:#a6a6a6;">°</span>
<div style="left:154px;top:1036px;width:2px;height:2px;background:#444;"></div>
<svg style="left:169.5px;top:1029px;" width="17" height="17" viewBox="0 0 17 17"><circle cx="8.5" cy="9.5" r="6.5" fill="none" stroke="#c8c8c8" stroke-width="1.6"/><path d="M6,1.2 L11,1.2 M8.5,1.2 L8.5,3" stroke="#c8c8c8" stroke-width="1.6"/><path d="M3,4 L4.5,2.5 M14,4 L12.5,2.5" stroke="#c8c8c8" stroke-width="1.4"/></svg>
<span class="t" style="left:196.4px;top:1030.67px;font-size:15.5px;color:#a6a6a6;">Opacity</span>
<span class="t" style="left:364px;top:1029.67px;font-size:15.5px;color:#2d8ceb;">100</span>
<span class="t" style="left:390px;top:1029.67px;font-size:15.5px;color:#a6a6a6;">%</span>
<div style="left:833px;top:786px;width:2px;height:378px;background:#0a0a0a;"></div>
<div style="left:835px;top:741px;width:1085px;height:423px;background:#232323;"></div>
<div style="left:834px;top:786px;width:1060px;height:16px;background:#1c1c1c;border-radius:9px 0 0 0"></div>
<div style="left:843px;top:788px;width:662px;height:14px;background:#3d3833;border:1px solid #4d443a"></div>
<div style="left:1506px;top:788px;width:383px;height:14px;background:#5e5e5e;"></div>
<div style="left:1502px;top:788px;width:7px;height:14px;background:#2d8ceb;border-radius:4px 0 0 4px"></div>
<div style="left:1886px;top:788px;width:7px;height:14px;background:#2d8ceb;border-radius:0 4px 4px 0"></div>
<div style="left:1607px;top:790px;width:3px;height:10px;background:#2d8ceb;"></div>
<span class="t" style="left:900.8px;top:805.33px;font-size:14px;color:#bdbdbd;">02:00f</span>
<span class="t" style="left:1297px;top:805.33px;font-size:14px;color:#bdbdbd;">10f</span>
<span class="t" style="left:1489px;top:805.33px;font-size:14px;color:#bdbdbd;">15f</span>
<span class="t" style="left:1681px;top:805.33px;font-size:14px;color:#bdbdbd;">20f</span>
<div style="left:1850px;top:802px;width:45px;height:26px;overflow:hidden">
<span class="t" style="left:12px;top:3.33px;font-size:14px;color:#bdbdbd;">03:00f</span>
</div>
<div style="left:922px;top:819px;width:1px;height:9px;background:#9a9a9a;"></div>
<div style="left:1307px;top:819px;width:1px;height:9px;background:#9a9a9a;"></div>
<div style="left:1499px;top:819px;width:1px;height:9px;background:#9a9a9a;"></div>
<div style="left:1691px;top:819px;width:1px;height:9px;background:#9a9a9a;"></div>
<div style="left:1884px;top:819px;width:1px;height:9px;background:#9a9a9a;"></div>
<span class="t" style="left:1103px;top:805.33px;font-size:14px;color:#bdbdbd;">05f</span>
<div style="left:835px;top:828.5px;width:1085px;height:1.8px;background:#0a0a0a;"></div>
<div style="left:835px;top:830.3px;width:1050px;height:20.5px;background:#606060;border-top:1.5px solid #6e6e6e"></div>
<div style="left:835px;top:850.8px;width:1085px;height:1.7px;background:#0a0a0a;"></div>
<div style="left:835px;top:852.5px;width:1050px;height:4.5px;background:#2a2a2a;"></div>
<div style="left:835px;top:857px;width:1085px;height:1.5px;background:#0a0a0a;"></div>
<div style="left:1116px;top:853px;width:37px;height:3.5px;background:#19c519;"></div>
<div style="left:1229px;top:853px;width:39px;height:3.5px;background:#19c519;"></div>
<div style="left:1884.7px;top:830.3px;width:8.5px;height:21px;background:#2d8ceb;border-radius:0 5px 5px 0"></div>
<svg style="left:1899.5px;top:832.5px;" width="16" height="20" viewBox="0 0 16 20"><path d="M0.5,0.5 L15.5,0.5 L15.5,12 L8,19.5 L0.5,12Z" fill="#b8b8b8"/></svg>
<div style="left:835px;top:858.5px;width:1050px;height:22px;background:#736a5a;"></div>
<div style="left:1115px;top:858.5px;width:38px;height:22px;background:#7b7263;"></div>
<svg style="left:1876px;top:858.5px;" width="9" height="8" viewBox="0 0 9 8"><path d="M0,0 L9,0 L9,8 Q9,0 0,0Z" fill="#3a3630"/></svg>
<div style="left:835px;top:881px;width:1050px;height:23px;background:#343434;"></div>
<div style="left:835px;top:904px;width:1050px;height:1px;background:#222222;"></div>
<div style="left:835px;top:905px;width:1050px;height:23px;background:#343434;"></div>
<div style="left:835px;top:928px;width:1050px;height:1px;background:#222222;"></div>
<div style="left:835px;top:929px;width:1050px;height:23px;background:#343434;"></div>
<div style="left:835px;top:952px;width:1050px;height:1px;background:#222222;"></div>
<div style="left:835px;top:953px;width:1050px;height:23px;background:#343434;"></div>
<div style="left:835px;top:976px;width:1050px;height:1px;background:#222222;"></div>
<div style="left:835px;top:977px;width:1050px;height:23px;background:#343434;"></div>
<div style="left:835px;top:1000px;width:1050px;height:1px;background:#222222;"></div>
<div style="left:835px;top:1001px;width:1050px;height:23px;background:#343434;"></div>
<div style="left:835px;top:1024px;width:1050px;height:1px;background:#222222;"></div>
<div style="left:835px;top:1025px;width:1050px;height:23px;background:#343434;"></div>
<div style="left:835px;top:1048px;width:1050px;height:1px;background:#222222;"></div>
<div style="left:1115px;top:881px;width:38px;height:168px;background:#474747;"></div>
<div style="left:1115px;top:904px;width:38px;height:1px;background:#222222;"></div>
<div style="left:1115px;top:928px;width:38px;height:1px;background:#222222;"></div>
<div style="left:1115px;top:952px;width:38px;height:1px;background:#222222;"></div>
<div style="left:1115px;top:976px;width:38px;height:1px;background:#222222;"></div>
<div style="left:1115px;top:1000px;width:38px;height:1px;background:#222222;"></div>
<div style="left:1115px;top:1024px;width:38px;height:1px;background:#222222;"></div>
<div style="left:1115px;top:1048px;width:38px;height:1px;background:#222222;"></div>
<div style="left:835px;top:1049px;width:1050px;height:115px;background:#323232;"></div>
<div style="left:1115px;top:1049px;width:38px;height:115px;background:#474747;"></div>
<div style="left:1885px;top:858.5px;width:35px;height:306px;background:#232323;"></div>
<div style="left:1885px;top:858.5px;width:9.5px;height:306px;background:#2e2e2e;"></div>
<div style="left:1894.5px;top:858.5px;width:1.3px;height:22.5px;background:#0e0e0e;"></div>
<div style="left:1114.4px;top:809px;width:1.3px;height:355px;background:#3a8ee6;"></div>
<svg style="left:1106.5px;top:809px;" width="17" height="19" viewBox="0 0 17 19"><path d="M1,0 L16,0 L16,9 L8.5,18.5 L1,9Z" fill="#2d8ceb"/></svg>
<svg style="left:1109.5px;top:885px;" width="11" height="16" viewBox="0 0 11 16"><path d="M1,1 Q5.5,1 5.5,3.5 L5.5,12.5 Q5.5,15 1,15 M10,1 Q5.5,1 5.5,3.5 M10,15 Q5.5,15 5.5,12.5" stroke="#c4c4c4" stroke-width="1.9" fill="none"/></svg>
<svg style="left:1109.5px;top:909px;" width="11" height="16" viewBox="0 0 11 16"><path d="M1,1 Q5.5,1 5.5,3.5 L5.5,12.5 Q5.5,15 1,15 M10,1 Q5.5,1 5.5,3.5 M10,15 Q5.5,15 5.5,12.5" stroke="#c4c4c4" stroke-width="1.9" fill="none"/></svg>
<svg style="left:1109.5px;top:933px;" width="11" height="16" viewBox="0 0 11 16"><path d="M1,1 Q5.5,1 5.5,3.5 L5.5,12.5 Q5.5,15 1,15 M10,1 Q5.5,1 5.5,3.5 M10,15 Q5.5,15 5.5,12.5" stroke="#c4c4c4" stroke-width="1.9" fill="none"/></svg>
<svg style="left:1109.5px;top:1005px;" width="11" height="16" viewBox="0 0 11 16"><path d="M1,1 Q5.5,1 5.5,3.5 L5.5,12.5 Q5.5,15 1,15 M10,1 Q5.5,1 5.5,3.5 M10,15 Q5.5,15 5.5,12.5" stroke="#c4c4c4" stroke-width="1.9" fill="none"/></svg>
<svg style="left:1109.5px;top:1029px;" width="11" height="16" viewBox="0 0 11 16"><path d="M1,1 Q5.5,1 5.5,3.5 L5.5,12.5 Q5.5,15 1,15 M10,1 Q5.5,1 5.5,3.5 M10,15 Q5.5,15 5.5,12.5" stroke="#c4c4c4" stroke-width="1.9" fill="none"/></svg>
<svg style="left:1109px;top:958px;" width="12" height="14" viewBox="0 0 12 14"><path d="M0.5,0.5 L11.5,0.5 L11.5,2.5 L7.5,7 L11.5,11.5 L11.5,13.5 L0.5,13.5 L0.5,11.5 L4.5,7 L0.5,2.5Z" fill="#b0b0b0"/></svg>
<svg style="left:1417px;top:958px;" width="12" height="14" viewBox="0 0 12 14"><path d="M0.5,0.5 L11.5,0.5 L11.5,2.5 L7.5,7 L11.5,11.5 L11.5,13.5 L0.5,13.5 L0.5,11.5 L4.5,7 L0.5,2.5Z" fill="#c8c8c8"/></svg>
<svg style="left:1686px;top:958px;" width="12" height="14" viewBox="0 0 12 14"><path d="M0.5,0.5 L11.5,0.5 L11.5,2.5 L7.5,7 L11.5,11.5 L11.5,13.5 L0.5,13.5 L0.5,11.5 L4.5,7 L0.5,2.5Z" fill="#b8b8b8"/></svg>
<svg style="left:1109px;top:982px;" width="12" height="14" viewBox="0 0 12 14"><path d="M0.5,0.5 L11.5,0.5 L11.5,2.5 L7.5,7 L11.5,11.5 L11.5,13.5 L0.5,13.5 L0.5,11.5 L4.5,7 L0.5,2.5Z" fill="#b0b0b0"/></svg>
<svg style="left:1340px;top:982px;" width="12" height="14" viewBox="0 0 12 14"><path d="M0.5,0.5 L11.5,0.5 L11.5,2.5 L7.5,7 L11.5,11.5 L11.5,13.5 L0.5,13.5 L0.5,11.5 L4.5,7 L0.5,2.5Z" fill="#c8c8c8"/></svg>
<svg style="left:1686px;top:982px;" width="12" height="14" viewBox="0 0 12 14"><path d="M0.5,0.5 L11.5,0.5 L11.5,2.5 L7.5,7 L11.5,11.5 L11.5,13.5 L0.5,13.5 L0.5,11.5 L4.5,7 L0.5,2.5Z" fill="#b8b8b8"/></svg>
<svg style="left:1895px;top:861px;" width="22" height="20" viewBox="0 0 22 20"><rect x="11" y="4" width="10" height="9.5" fill="#c0c0c0"/><path d="M11,1 L1,11 L9,11" fill="none" stroke="#c0c0c0" stroke-width="1.5"/><circle cx="11" cy="12.5" r="4" fill="#232323" stroke="#c0c0c0" stroke-width="1.5"/></svg>
</body></html>
